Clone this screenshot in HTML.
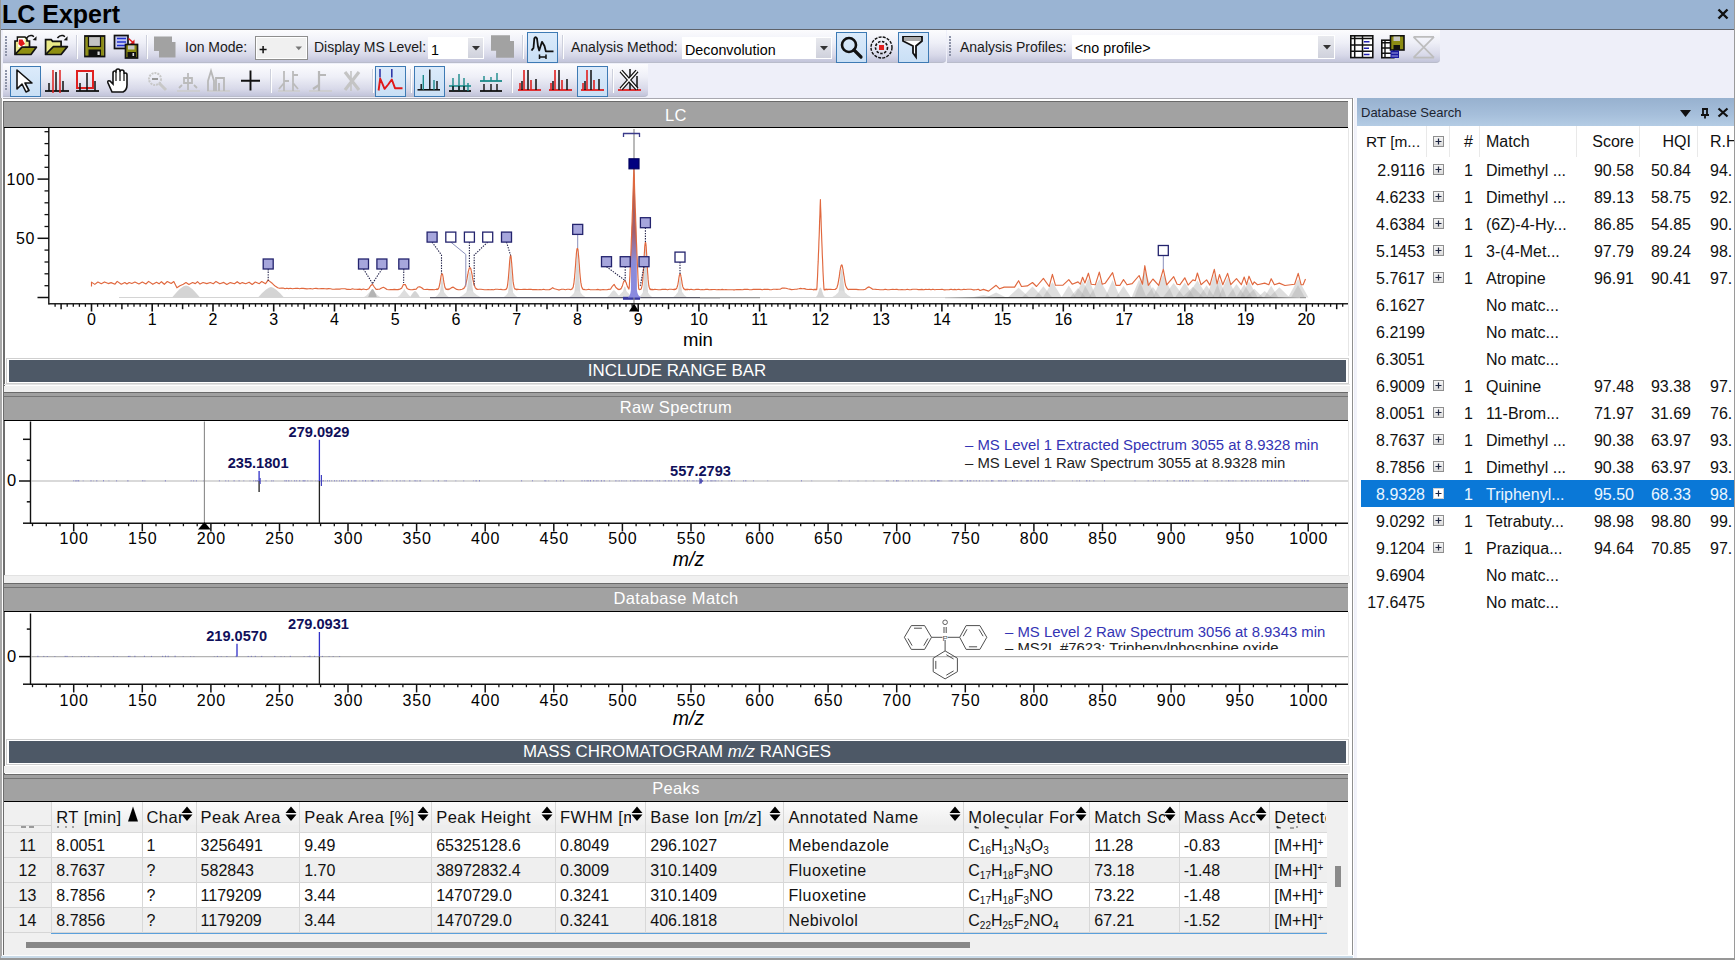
<!DOCTYPE html><html><head><meta charset="utf-8"><style>
html,body{margin:0;padding:0;}
body{width:1735px;height:960px;overflow:hidden;position:relative;background:#eeeff9;font-family:"Liberation Sans", sans-serif;}
div{box-sizing:border-box;}
svg{position:absolute;overflow:visible;}
</style></head><body>
<div style="position:absolute;left:0px;top:0px;width:1735px;height:29px;background:#9ab4d3;"></div>
<div style="position:absolute;left:0px;top:28.5px;width:1735px;height:1.5px;background:#5e6269;"></div>
<div style="position:absolute;left:0px;top:0px;width:1px;height:960px;background:#9a9a9a;"></div>
<div style="position:absolute;left:1734px;top:0px;width:1px;height:960px;background:#9a9a9a;"></div>
<div style="position:absolute;left:2px;top:0.5px;font-size:25px;line-height:26px;color:#000;font-weight:bold;white-space:nowrap;">LC Expert</div>
<svg style="left:1717px;top:8px" width="12" height="12"><path d="M1.5 1.5L10.5 10.5M10.5 1.5L1.5 10.5" stroke="#111" stroke-width="2.4"/></svg>
<div style="position:absolute;left:3px;top:30px;width:943px;height:33px;background:linear-gradient(#fcfcfe 0%,#eeeff7 40%,#d8d9e9 78%,#c2c4da 100%);border-bottom:1px solid #b9bccb;border-radius:0 0 4px 0;"></div>
<div style="position:absolute;left:5px;top:36px;width:2px;height:2px;background:#8d93a8;"></div>
<div style="position:absolute;left:5px;top:39px;width:2px;height:2px;background:#8d93a8;"></div>
<div style="position:absolute;left:5px;top:42px;width:2px;height:2px;background:#8d93a8;"></div>
<div style="position:absolute;left:5px;top:45px;width:2px;height:2px;background:#8d93a8;"></div>
<div style="position:absolute;left:5px;top:48px;width:2px;height:2px;background:#8d93a8;"></div>
<div style="position:absolute;left:5px;top:51px;width:2px;height:2px;background:#8d93a8;"></div>
<div style="position:absolute;left:5px;top:54px;width:2px;height:2px;background:#8d93a8;"></div>
<div style="position:absolute;left:947px;top:30px;width:493px;height:33px;background:linear-gradient(#fcfcfe 0%,#eeeff7 40%,#d8d9e9 78%,#c2c4da 100%);border-bottom:1px solid #b9bccb;border-radius:0 0 4px 0;"></div>
<div style="position:absolute;left:949px;top:36px;width:2px;height:2px;background:#8d93a8;"></div>
<div style="position:absolute;left:949px;top:39px;width:2px;height:2px;background:#8d93a8;"></div>
<div style="position:absolute;left:949px;top:42px;width:2px;height:2px;background:#8d93a8;"></div>
<div style="position:absolute;left:949px;top:45px;width:2px;height:2px;background:#8d93a8;"></div>
<div style="position:absolute;left:949px;top:48px;width:2px;height:2px;background:#8d93a8;"></div>
<div style="position:absolute;left:949px;top:51px;width:2px;height:2px;background:#8d93a8;"></div>
<div style="position:absolute;left:949px;top:54px;width:2px;height:2px;background:#8d93a8;"></div>
<div style="position:absolute;left:3px;top:64px;width:645px;height:33px;background:linear-gradient(#fcfcfe 0%,#eeeff7 40%,#d8d9e9 78%,#c2c4da 100%);border-bottom:1px solid #b9bccb;border-radius:0 0 4px 0;"></div>
<div style="position:absolute;left:5px;top:70px;width:2px;height:2px;background:#8d93a8;"></div>
<div style="position:absolute;left:5px;top:73px;width:2px;height:2px;background:#8d93a8;"></div>
<div style="position:absolute;left:5px;top:76px;width:2px;height:2px;background:#8d93a8;"></div>
<div style="position:absolute;left:5px;top:79px;width:2px;height:2px;background:#8d93a8;"></div>
<div style="position:absolute;left:5px;top:82px;width:2px;height:2px;background:#8d93a8;"></div>
<div style="position:absolute;left:5px;top:85px;width:2px;height:2px;background:#8d93a8;"></div>
<div style="position:absolute;left:5px;top:88px;width:2px;height:2px;background:#8d93a8;"></div>
<div style="position:absolute;left:76px;top:35px;width:1px;height:24px;background:#cdd0dc;"></div>
<div style="position:absolute;left:77px;top:35px;width:1px;height:24px;background:#fff;"></div>
<div style="position:absolute;left:146px;top:35px;width:1px;height:24px;background:#cdd0dc;"></div>
<div style="position:absolute;left:147px;top:35px;width:1px;height:24px;background:#fff;"></div>
<div style="position:absolute;left:522px;top:35px;width:1px;height:24px;background:#cdd0dc;"></div>
<div style="position:absolute;left:523px;top:35px;width:1px;height:24px;background:#fff;"></div>
<div style="position:absolute;left:562px;top:35px;width:1px;height:24px;background:#cdd0dc;"></div>
<div style="position:absolute;left:563px;top:35px;width:1px;height:24px;background:#fff;"></div>
<div style="position:absolute;left:185px;top:39px;font-size:14px;line-height:16px;color:#1a1a1a;font-weight:normal;white-space:nowrap;">Ion Mode:</div>
<div style="position:absolute;left:255px;top:36px;width:53px;height:24px;background:#f0f0f0;border:1px solid #8e8e8e;box-shadow:inset 0 0 0 1px #fff;"></div>
<svg style="left:0;top:0" width="320" height="62"><path d="M259.6 49.6H266.6M263.1 46V53.2" stroke="#111" stroke-width="1.5"/><path d="M295.5 46.6H302L298.75 50.3Z" fill="#777"/></svg>
<div style="position:absolute;left:314px;top:39px;font-size:14px;line-height:16px;color:#1a1a1a;font-weight:normal;white-space:nowrap;">Display MS Level:</div>
<div style="position:absolute;left:428px;top:37px;width:56px;height:22px;background:#fff;border:1px solid #fff;"></div>
<div style="position:absolute;left:431px;top:42px;font-size:14.3px;line-height:17px;color:#000;font-weight:normal;white-space:nowrap;">1</div>
<div style="position:absolute;left:468px;top:38px;width:15px;height:20px;background:linear-gradient(#e8e9ee,#cfd1dc);"></div>
<svg style="left:472.0px;top:46.0px" width="8" height="5"><path d="M0 0H8L4 4.5Z" fill="#333"/></svg>
<div style="position:absolute;left:571px;top:39px;font-size:14px;line-height:16px;color:#1a1a1a;font-weight:normal;white-space:nowrap;">Analysis Method:</div>
<div style="position:absolute;left:682px;top:37px;width:150px;height:22px;background:#fff;border:1px solid #fff;"></div>
<div style="position:absolute;left:685px;top:42px;font-size:14.3px;line-height:17px;color:#000;font-weight:normal;white-space:nowrap;">Deconvolution</div>
<div style="position:absolute;left:816px;top:38px;width:15px;height:20px;background:linear-gradient(#e8e9ee,#cfd1dc);"></div>
<svg style="left:820.0px;top:46.0px" width="8" height="5"><path d="M0 0H8L4 4.5Z" fill="#333"/></svg>
<div style="position:absolute;left:960px;top:39px;font-size:14px;line-height:16px;color:#1a1a1a;font-weight:normal;white-space:nowrap;">Analysis Profiles:</div>
<div style="position:absolute;left:1072px;top:35px;width:263px;height:24px;background:#fff;border:1px solid #fff;"></div>
<div style="position:absolute;left:1075px;top:40px;font-size:14.3px;line-height:17px;color:#000;font-weight:normal;white-space:nowrap;">&lt;no profile&gt;</div>
<div style="position:absolute;left:1318px;top:36px;width:16px;height:22px;background:linear-gradient(#e8e9ee,#cfd1dc);"></div>
<svg style="left:1322.5px;top:45.0px" width="8" height="5"><path d="M0 0H8L4 4.5Z" fill="#333"/></svg>
<div style="position:absolute;left:527px;top:32px;width:31px;height:31px;background:linear-gradient(#dcebfb,#c9dff5);border:1px solid #3d7ab4;"></div>
<div style="position:absolute;left:836px;top:32px;width:31px;height:31px;background:linear-gradient(#dcebfb,#c9dff5);border:1px solid #3d7ab4;"></div>
<div style="position:absolute;left:898px;top:32px;width:31px;height:31px;background:linear-gradient(#dcebfb,#c9dff5);border:1px solid #3d7ab4;"></div>
<div style="position:absolute;left:270px;top:69px;width:1px;height:24px;background:#cdd0dc;"></div>
<div style="position:absolute;left:271px;top:69px;width:1px;height:24px;background:#fff;"></div>
<div style="position:absolute;left:372px;top:69px;width:1px;height:24px;background:#cdd0dc;"></div>
<div style="position:absolute;left:373px;top:69px;width:1px;height:24px;background:#fff;"></div>
<div style="position:absolute;left:410px;top:69px;width:1px;height:24px;background:#cdd0dc;"></div>
<div style="position:absolute;left:411px;top:69px;width:1px;height:24px;background:#fff;"></div>
<div style="position:absolute;left:511px;top:69px;width:1px;height:24px;background:#cdd0dc;"></div>
<div style="position:absolute;left:512px;top:69px;width:1px;height:24px;background:#fff;"></div>
<div style="position:absolute;left:612px;top:69px;width:1px;height:24px;background:#cdd0dc;"></div>
<div style="position:absolute;left:613px;top:69px;width:1px;height:24px;background:#fff;"></div>
<div style="position:absolute;left:10px;top:66px;width:31px;height:31px;background:linear-gradient(#dcebfb,#c9dff5);border:1px solid #3d7ab4;"></div>
<div style="position:absolute;left:375px;top:66px;width:31px;height:31px;background:linear-gradient(#dcebfb,#c9dff5);border:1px solid #3d7ab4;"></div>
<div style="position:absolute;left:414px;top:66px;width:31px;height:31px;background:linear-gradient(#dcebfb,#c9dff5);border:1px solid #3d7ab4;"></div>
<div style="position:absolute;left:577px;top:66px;width:31px;height:31px;background:linear-gradient(#dcebfb,#c9dff5);border:1px solid #3d7ab4;"></div>
<svg style="left:0;top:0" width="80" height="62"><path d="M15 54.5V41H17.5V37H25L27 39V41H29.5V47.2" fill="#eaea90" stroke="#111" stroke-width="1.7"/><rect x="18.2" y="38" width="6.5" height="9" fill="#fff"/><path d="M19 39.5L22.5 39.5L25 44L21 46.5L18.5 44Z" fill="#e01818"/><path d="M26.6 38 Q29 34.8 32 35.6 L34 36.6" stroke="#111" stroke-width="1.6" fill="none"/><path d="M36.6 36.2L36.4 40.4L32.6 40Z" fill="#111"/><path d="M15 54.5L22 47.2H36.4L31 54.5Z" fill="#8f8f12" stroke="#111" stroke-width="1.7" stroke-linejoin="round"/><path d="M45.6 54.5V39.6H51.2L52.6 41.3H61.1V46.6" fill="#eaea88" stroke="#111" stroke-width="1.7"/><path d="M57.4 38 Q60 34.8 63 35.6 L65 36.6" stroke="#111" stroke-width="1.6" fill="none"/><path d="M67.6 36.2L67.4 40.6L63.6 40.2Z" fill="#111"/><path d="M45.6 54.5L53.4 46.6H67.4L61.1 54.5Z" fill="#8f8f12" stroke="#111" stroke-width="1.7" stroke-linejoin="round"/></svg>
<svg style="left:84px;top:35px" width="21" height="22" viewBox="0 0 21 22"><rect x="1" y="1" width="19.5" height="20.5" fill="#8c8c14" stroke="#111" stroke-width="1.8"/><rect x="4.5" y="1.5" width="12" height="10" fill="#c4c4c4" stroke="#111" stroke-width="1.2"/><rect x="4.5" y="14.5" width="12.5" height="7" fill="#111"/><rect x="13.5" y="16.5" width="2.2" height="3.5" fill="#ddd"/><path d="M1.8 2V20.5M19.6 2V20.5" stroke="#a6a63a" stroke-width="0.8"/></svg>
<svg style="left:113px;top:34px" width="26" height="25" viewBox="0 0 26 25"><rect x="1.5" y="1.5" width="13.5" height="13" fill="#c4c8f0" stroke="#111" stroke-width="1.7"/><path d="M4 4.5H13M4 8H13M4 11.5H13" stroke="#2030d0" stroke-width="1.7"/><path d="M15.5 4.5L20 8.5" stroke="#e01818" stroke-width="1.5"/><path d="M21.5 5.5V10H17Z" fill="#e01818"/><rect x="12.5" y="10.5" width="12" height="13.5" fill="#8c8c14" stroke="#111" stroke-width="1.7"/><rect x="15" y="11.5" width="6.5" height="4" fill="#c8c8c8"/><rect x="14.5" y="18" width="8.5" height="5.5" fill="#111"/><rect x="19.5" y="19" width="1.6" height="3" fill="#ddd"/></svg>
<svg style="left:0;top:0" width="600" height="62"><path d="M491 35.3H510V41H514V57.7H496.1V50.7H491Z" fill="#a2a2a2"/><path d="M154 36.6H172V42H175.5V57.4H159V51H154Z" fill="#a2a2a2"/><path d="M531.6 50.7Q532.5 49 533.5 48L534.3 38.5Q535.5 36 537 38.5L538 46.5L539.2 50.5L542 41.8L544.5 46L545.8 51.3H553.5" stroke="#111" stroke-width="1.8" fill="none" stroke-linejoin="round"/><path d="M539.5 57H546M539.5 54.5V59M546 54.5V59" stroke="#111" stroke-width="1.5"/></svg>
<svg style="left:839px;top:35px" width="25" height="25" viewBox="0 0 25 25"><circle cx="10" cy="10" r="7" fill="none" stroke="#111" stroke-width="2.6"/><path d="M15 15L22 22" stroke="#111" stroke-width="3.2" stroke-linecap="round"/></svg>
<svg style="left:869px;top:35px" width="25" height="25" viewBox="0 0 25 25"><circle cx="12.5" cy="12.5" r="10.5" fill="none" stroke="#111" stroke-width="1.4" stroke-dasharray="3 1.2"/><circle cx="12.5" cy="12.5" r="6" fill="none" stroke="#111" stroke-width="1.6" stroke-dasharray="2.5 1.5"/><rect x="10" y="10" width="5" height="5" fill="#e02020"/></svg>
<svg style="left:901px;top:35px" width="24" height="25" viewBox="0 0 24 25"><path d="M2 2H21V6L15 11V22L12 18V11L2 6Z" fill="#fff" stroke="#111" stroke-width="1.8"/><rect x="3" y="2" width="17" height="4" fill="#a8a8a8"/></svg>
<svg style="left:1340px;top:30px" width="100" height="32"><rect x="10.8" y="5.8" width="22" height="21.8" fill="#fff" stroke="#111" stroke-width="1.6"/><path d="M10.5 8.6H33M10.5 15H33M10.5 21.3H33M14.7 5.5V28M22.5 5.5V28" stroke="#111" stroke-width="1.5"/><path d="M23.8 11.8H29.5M23.8 18.2H29M23.8 24.5H29.5" stroke="#2020b0" stroke-width="1.4"/><rect x="41.8" y="10.2" width="12" height="17.5" fill="#fff" stroke="#111" stroke-width="1.6"/><path d="M41.5 12.8H54M41.5 18H54M41.5 23.2H54M45 10V28" stroke="#111" stroke-width="1.4"/><rect x="50.5" y="5.8" width="13.5" height="14.2" fill="#8c8c14" stroke="#111" stroke-width="1.6"/><rect x="53.5" y="6.5" width="6.5" height="4.5" fill="#c8c8c8"/><rect x="53.5" y="15" width="6.5" height="5" fill="#111"/><rect x="50.5" y="20.5" width="8.5" height="7.5" fill="#1818a0"/><path d="M51.5 23H58M51.5 26H58" stroke="#c8c8f0" stroke-width="0.8"/><path d="M73.5 6.8H94M73.5 27.6H94M94 6.8L73.5 27.6M73.5 6.8L94 27.6" stroke="#bdbdbd" stroke-width="1.7" fill="none"/></svg>
<svg style="left:14px;top:68px" width="24" height="26" viewBox="0 0 24 26"><path d="M3 2L3 21L8 16L12 24L15 22.5L11 15L18 15Z" fill="#fff" stroke="#111" stroke-width="1.6" stroke-linejoin="round"/></svg>
<svg style="left:44px;top:69px" width="26" height="24" viewBox="0 0 26 24"><path d="M1 22H25" stroke="#111" stroke-width="1.8"/><path d="M5 22V14M12 22V3M19 22V12" stroke="#111" stroke-width="1.5"/><path d="M9 1V24M16 1V24" stroke="#e02020" stroke-width="1.5"/></svg>
<svg style="left:75px;top:69px" width="25" height="24" viewBox="0 0 25 24"><path d="M1 22H24" stroke="#111" stroke-width="1.8"/><rect x="2" y="2" width="16" height="17" fill="none" stroke="#e02020" stroke-width="2"/><path d="M5 22V14M12 22V4M20 22V12" stroke="#111" stroke-width="1.5"/></svg>
<svg style="left:106px;top:68px" width="22" height="26" viewBox="0 0 22 26"><path d="M6 24 L2 15 Q1 12 4 13 L7 16 V5 Q7 3 9 3 Q10 3 10 5 V3 Q10 1 12 1 Q14 1 14 3 V4 Q14 2 16 2 Q18 2 18 4 V6 Q18 5 19.5 5 Q21 5 21 7 V17 Q21 22 17 24Z" fill="#fff" stroke="#111" stroke-width="1.6"/><path d="M10 5V13M14 4V13M18 6V13" stroke="#111" stroke-width="1.2"/></svg>
<svg style="left:147px;top:71px" width="22" height="22" viewBox="0 0 22 22"><circle cx="8" cy="8" r="6" fill="none" stroke="#c8c8c8" stroke-width="2" stroke-dasharray="2 1"/><path d="M5 8H11" stroke="#999" stroke-width="2"/><path d="M12 12L19 19" stroke="#c8c8c8" stroke-width="3"/></svg>
<svg style="left:176px;top:70px" width="25" height="23" viewBox="0 0 25 23"><path d="M1 21H24" stroke="#ccc" stroke-width="1.6"/><path d="M12 3V20M8 8H16V13H8Z" stroke="#bbb" stroke-width="1.8" fill="none"/><path d="M3 18L6 15M21 18L18 15" stroke="#bbb" stroke-width="1.8"/></svg>
<svg style="left:206px;top:69px" width="25" height="24" viewBox="0 0 25 24"><path d="M1 22H24" stroke="#ccc" stroke-width="1.6"/><path d="M2 22V12L5 2L8 12V22M10 22V9H18V22M13 14V22" stroke="#b8b8b8" stroke-width="1.8" fill="none"/></svg>
<svg style="left:240px;top:70px" width="21" height="22" viewBox="0 0 21 22"><path d="M10.5 0.5V20.5M1 10.7H20" stroke="#111" stroke-width="1.9"/></svg>
<svg style="left:277px;top:69px" width="24" height="24" viewBox="0 0 24 24"><path d="M1 22H23" stroke="#ccc" stroke-width="1.6"/><path d="M7 2V22M16 2V22M7 14L2 20M16 14L21 20M16 6H21M7 12H12" stroke="#bbb" stroke-width="1.8" fill="none"/></svg>
<svg style="left:308px;top:69px" width="25" height="24" viewBox="0 0 25 24"><path d="M1 22H24" stroke="#ccc" stroke-width="1.6"/><path d="M11 2V22M11 6H18M11 16L5 20" stroke="#b8b8b8" stroke-width="2.2" fill="none"/></svg>
<svg style="left:342px;top:69px" width="20" height="24" viewBox="0 0 20 24"><path d="M3 3L17 21M17 3L3 21" stroke="#c4c4c4" stroke-width="3.2"/><path d="M9 2V22" stroke="#c4c4c4" stroke-width="1.6"/></svg>
<svg style="left:0;top:0" width="460" height="97"><path d="M380 69V77.5M391.8 69V77.5" stroke="#3038a8" stroke-width="1.6"/><path d="M378.6 90.5L380.2 78.5L384.6 88.8L388.2 84.5L391.8 79.5L395 88.2H402.5" stroke="#e01818" stroke-width="1.9" fill="none" stroke-linejoin="round"/><path d="M417.5 89.8H440" stroke="#111" stroke-width="1.6"/><path d="M421.2 89.8V84M429.8 89.8V69.5M437 89.8V81" stroke="#111" stroke-width="1.4"/><path d="M423.3 89.8V75M434 89.8V80" stroke="#1a8a8a" stroke-width="1.4"/></svg>
<svg style="left:448px;top:69px" width="24" height="24" viewBox="0 0 24 24"><path d="M1 22H23" stroke="#111" stroke-width="1.8"/><path d="M1 17H23" stroke="#1a8a8a" stroke-width="1.6"/><path d="M5 22V9M11 22V5M16 22V9M20 22V14" stroke="#1a8a8a" stroke-width="1.4"/><path d="M5 22V17M11 22V17M16 22V17" stroke="#111" stroke-width="1.4"/></svg>
<svg style="left:479px;top:69px" width="24" height="24" viewBox="0 0 24 24"><path d="M1 22H23" stroke="#111" stroke-width="1.8"/><path d="M1 12H23" stroke="#1a8a8a" stroke-width="1.8"/><path d="M5 12V7M12 12V8M18 12V4" stroke="#1a8a8a" stroke-width="1.4"/><path d="M5 22V15M12 22V15M18 22V15" stroke="#111" stroke-width="1.4"/></svg>
<svg style="left:517px;top:68px" width="25" height="24" viewBox="0 0 25 24"><path d="M1 22H24" stroke="#e02020" stroke-width="1.8"/><path d="M7 22V2M14 22V12M3 22V15" stroke="#e02020" stroke-width="1.6"/><path d="M11 22V2M19 22V11M5 22V13" stroke="#111" stroke-width="1.5"/></svg>
<svg style="left:548px;top:68px" width="25" height="24" viewBox="0 0 25 24"><path d="M1 22H24" stroke="#e02020" stroke-width="1.8"/><path d="M7 22V2M14 22V12M3 22V15" stroke="#e02020" stroke-width="1.6"/><path d="M11 22V2M19 22V11M5 22V13" stroke="#111" stroke-width="1.5"/></svg>
<svg style="left:580px;top:68px" width="25" height="24" viewBox="0 0 25 24"><path d="M1 22H24" stroke="#e02020" stroke-width="1.8"/><path d="M7 22V2M14 22V12M3 22V15" stroke="#e02020" stroke-width="1.6"/><path d="M11 22V2M19 22V11M5 22V13" stroke="#111" stroke-width="1.5"/></svg>
<svg style="left:617px;top:68px" width="25" height="25" viewBox="0 0 25 25"><path d="M1 22H24" stroke="#e02020" stroke-width="1.8"/><path d="M13 1V22M20 8V22" stroke="#111" stroke-width="1.5"/><path d="M4 3L20 21M20 3L4 21" stroke="#111" stroke-width="4"/><path d="M4 3L20 21M20 3L4 21" stroke="#fff" stroke-width="1.4"/></svg>
<div style="position:absolute;left:1px;top:98px;width:1353px;height:862px;background:#fff;"></div>
<div style="position:absolute;left:3px;top:98px;width:1350px;height:1px;background:#a8a8b0;"></div>
<div style="position:absolute;left:0px;top:98px;width:2px;height:862px;background:#a9a9a9;"></div>
<div style="position:absolute;left:2px;top:98px;width:1px;height:858px;background:#fff;"></div>
<div style="position:absolute;left:1352px;top:98px;width:1px;height:860px;background:#8f8f8f;"></div>
<div style="position:absolute;left:3px;top:101px;width:1.5px;height:855px;background:#6e6e6e;"></div>
<div style="position:absolute;left:3px;top:955px;width:1350px;height:1px;background:#fdfdfd;"></div>
<div style="position:absolute;left:1px;top:956px;width:1352px;height:2px;background:#c9dae8;"></div>
<div style="position:absolute;left:4px;top:101px;width:1344px;height:1px;background:#6a6a6a;"></div>
<div style="position:absolute;left:4px;top:102px;width:1344px;height:25px;background:#a2a2a2;"></div>
<div style="position:absolute;left:4px;top:127px;width:1344px;height:1px;background:#000;"></div>
<div style="position:absolute;left:4px;width:1344px;top:103px;height:24px;line-height:24px;text-align:center;color:#fff;font-size:16.5px;letter-spacing:0.35px;">LC</div>
<div style="position:absolute;left:6px;top:357.5px;width:1343px;height:26.5px;background:#fff;border:1px solid #cfcfcf;"></div>
<div style="position:absolute;left:9px;top:360px;width:1337px;height:22px;background:#4d5866;"></div>
<div style="position:absolute;left:8px;width:1338px;top:360px;height:22px;line-height:22px;text-align:center;color:#fff;font-size:16.9px;">INCLUDE RANGE BAR</div>
<div style="position:absolute;left:4px;top:386px;width:1346px;height:6px;background:#f0f0f0;"></div>
<div style="position:absolute;left:4px;top:384px;width:1346px;height:1px;background:#e4e4e4;"></div>
<div style="position:absolute;left:1348px;top:421px;width:1px;height:154px;background:#e6e6e6;"></div>
<div style="position:absolute;left:4px;top:575px;width:1345px;height:1px;background:#e2e2e2;"></div>
<div style="position:absolute;left:1348px;top:612px;width:1px;height:125px;background:#e6e6e6;"></div>
<div style="position:absolute;left:1348px;top:128px;width:1px;height:228px;background:#e6e6e6;"></div>
<div style="position:absolute;left:4px;top:392px;width:1344px;height:1px;background:#6a6a6a;"></div>
<div style="position:absolute;left:4px;top:393px;width:1344px;height:2.5px;background:#a0a0a0;"></div>
<div style="position:absolute;left:4px;top:395.5px;width:1344px;height:1px;background:#747474;"></div>
<div style="position:absolute;left:4px;top:396.5px;width:1344px;height:23.5px;background:#a2a2a2;"></div>
<div style="position:absolute;left:4px;top:420px;width:1344px;height:1px;background:#000;"></div>
<div style="position:absolute;left:4px;width:1344px;top:394px;height:26px;line-height:26px;text-align:center;color:#fff;font-size:16.5px;letter-spacing:0.35px;">Raw Spectrum</div>
<div style="position:absolute;left:4px;top:576px;width:1346px;height:7px;background:#f0f0f0;"></div>
<div style="position:absolute;left:4px;top:583px;width:1344px;height:1px;background:#6a6a6a;"></div>
<div style="position:absolute;left:4px;top:584px;width:1344px;height:2.5px;background:#a0a0a0;"></div>
<div style="position:absolute;left:4px;top:586.5px;width:1344px;height:1px;background:#747474;"></div>
<div style="position:absolute;left:4px;top:587.5px;width:1344px;height:23.5px;background:#a2a2a2;"></div>
<div style="position:absolute;left:4px;top:611px;width:1344px;height:1px;background:#000;"></div>
<div style="position:absolute;left:4px;width:1344px;top:585px;height:26px;line-height:26px;text-align:center;color:#fff;font-size:16.5px;letter-spacing:0.35px;">Database Match</div>
<div style="position:absolute;left:6px;top:738.5px;width:1343px;height:26.5px;background:#fff;border:1px solid #cfcfcf;"></div>
<div style="position:absolute;left:9px;top:741px;width:1337px;height:22px;background:#4d5866;"></div>
<div style="position:absolute;left:8px;width:1338px;top:741px;height:22px;line-height:22px;text-align:center;color:#fff;font-size:16.9px;">MASS CHROMATOGRAM <i>m/z</i> RANGES</div>
<div style="position:absolute;left:4px;top:766px;width:1346px;height:7px;background:#f0f0f0;"></div>
<div style="position:absolute;left:4px;top:774px;width:1344px;height:1px;background:#6a6a6a;"></div>
<div style="position:absolute;left:4px;top:775px;width:1344px;height:2.5px;background:#a0a0a0;"></div>
<div style="position:absolute;left:4px;top:777.5px;width:1344px;height:1px;background:#747474;"></div>
<div style="position:absolute;left:4px;top:778.5px;width:1344px;height:22.5px;background:#a2a2a2;"></div>
<div style="position:absolute;left:4px;top:801px;width:1344px;height:1px;background:#000;"></div>
<div style="position:absolute;left:4px;width:1344px;top:776px;height:25px;line-height:25px;text-align:center;color:#fff;font-size:16.5px;letter-spacing:0.35px;">Peaks</div>
<div style="position:absolute;left:1355px;top:98px;width:380px;height:862px;background:#fff;"></div>
<div style="position:absolute;left:1355px;top:98px;width:2px;height:862px;background:#f2f3fa;"></div>
<div style="position:absolute;left:1357px;top:98px;width:377px;height:28px;background:linear-gradient(#97b1cf,#a6bfdb 60%,#b4cce4);"></div>
<div style="position:absolute;left:1361px;top:105px;font-size:13px;line-height:16px;color:#1b2431;font-weight:normal;white-space:nowrap;">Database Search</div>
<svg style="left:1680px;top:110px" width="12" height="8"><path d="M0 0H11L5.5 7Z" fill="#111"/></svg>
<svg style="left:1699.5px;top:107.5px" width="10" height="12"><path d="M2 1H8M3 1V7H7V1M1 7H9M5 7V10.5" stroke="#111" stroke-width="1.8" fill="none"/></svg>
<svg style="left:1717px;top:107px" width="12" height="11"><path d="M1.5 1.5L10.5 9.5M10.5 1.5L1.5 9.5" stroke="#111" stroke-width="2.2"/></svg>
<div style="position:absolute;left:1426px;top:126px;width:1px;height:31px;background:#e9e9e9;"></div>
<div style="position:absolute;left:1449px;top:126px;width:1px;height:31px;background:#e9e9e9;"></div>
<div style="position:absolute;left:1479px;top:126px;width:1px;height:31px;background:#e9e9e9;"></div>
<div style="position:absolute;left:1576px;top:126px;width:1px;height:31px;background:#e9e9e9;"></div>
<div style="position:absolute;left:1639px;top:126px;width:1px;height:31px;background:#e9e9e9;"></div>
<div style="position:absolute;left:1697px;top:126px;width:1px;height:31px;background:#e9e9e9;"></div>
<div style="position:absolute;left:1366px;top:133px;font-size:15.4px;line-height:18px;color:#111;font-weight:normal;white-space:nowrap;">RT [m...</div>
<div style="position:absolute;left:1433px;top:136px;width:11px;height:11px;background:linear-gradient(#f6f6f6,#dcdcdc);border:1px solid #8e8e8e;"></div>
<svg style="left:1433px;top:136px" width="11" height="11"><path d="M2.5 5.5H8.5M5.5 2.5V8.5" stroke="#1c2440" stroke-width="1.2"/></svg>
<div style="position:absolute;left:1273px;width:200px;top:133px;text-align:right;font-size:16px;line-height:18px;color:#111;white-space:nowrap;">#</div>
<div style="position:absolute;left:1486px;top:133px;font-size:16px;line-height:18px;color:#111;font-weight:normal;white-space:nowrap;">Match</div>
<div style="position:absolute;left:1434px;width:200px;top:133px;text-align:right;font-size:16px;line-height:18px;color:#111;white-space:nowrap;">Score</div>
<div style="position:absolute;left:1491px;width:200px;top:133px;text-align:right;font-size:16px;line-height:18px;color:#111;white-space:nowrap;">HQI</div>
<div style="position:absolute;left:1710px;top:133px;font-size:16px;line-height:18px;color:#111;font-weight:normal;white-space:nowrap;">R.H</div>
<div style="position:absolute;left:1225px;width:200px;top:162px;text-align:right;font-size:16px;line-height:18px;color:#111;white-space:nowrap;">2.9116</div>
<div style="position:absolute;left:1433px;top:164px;width:11px;height:11px;background:linear-gradient(#f6f6f6,#dcdcdc);border:1px solid #8e8e8e;"></div>
<svg style="left:1433px;top:164px" width="11" height="11"><path d="M2.5 5.5H8.5M5.5 2.5V8.5" stroke="#1c2440" stroke-width="1.2"/></svg>
<div style="position:absolute;left:1273px;width:200px;top:162px;text-align:right;font-size:16px;line-height:18px;color:#111;white-space:nowrap;">1</div>
<div style="position:absolute;left:1434px;width:200px;top:162px;text-align:right;font-size:16px;line-height:18px;color:#111;white-space:nowrap;">90.58</div>
<div style="position:absolute;left:1491px;width:200px;top:162px;text-align:right;font-size:16px;line-height:18px;color:#111;white-space:nowrap;">50.84</div>
<div style="position:absolute;left:1710px;top:162px;font-size:16px;line-height:18px;color:#111;font-weight:normal;white-space:nowrap;">94.</div>
<div style="position:absolute;left:1486px;top:162px;font-size:16px;line-height:18px;color:#111;font-weight:normal;white-space:nowrap;">Dimethyl ...</div>
<div style="position:absolute;left:1225px;width:200px;top:189px;text-align:right;font-size:16px;line-height:18px;color:#111;white-space:nowrap;">4.6233</div>
<div style="position:absolute;left:1433px;top:191px;width:11px;height:11px;background:linear-gradient(#f6f6f6,#dcdcdc);border:1px solid #8e8e8e;"></div>
<svg style="left:1433px;top:191px" width="11" height="11"><path d="M2.5 5.5H8.5M5.5 2.5V8.5" stroke="#1c2440" stroke-width="1.2"/></svg>
<div style="position:absolute;left:1273px;width:200px;top:189px;text-align:right;font-size:16px;line-height:18px;color:#111;white-space:nowrap;">1</div>
<div style="position:absolute;left:1434px;width:200px;top:189px;text-align:right;font-size:16px;line-height:18px;color:#111;white-space:nowrap;">89.13</div>
<div style="position:absolute;left:1491px;width:200px;top:189px;text-align:right;font-size:16px;line-height:18px;color:#111;white-space:nowrap;">58.75</div>
<div style="position:absolute;left:1710px;top:189px;font-size:16px;line-height:18px;color:#111;font-weight:normal;white-space:nowrap;">92.</div>
<div style="position:absolute;left:1486px;top:189px;font-size:16px;line-height:18px;color:#111;font-weight:normal;white-space:nowrap;">Dimethyl ...</div>
<div style="position:absolute;left:1225px;width:200px;top:216px;text-align:right;font-size:16px;line-height:18px;color:#111;white-space:nowrap;">4.6384</div>
<div style="position:absolute;left:1433px;top:218px;width:11px;height:11px;background:linear-gradient(#f6f6f6,#dcdcdc);border:1px solid #8e8e8e;"></div>
<svg style="left:1433px;top:218px" width="11" height="11"><path d="M2.5 5.5H8.5M5.5 2.5V8.5" stroke="#1c2440" stroke-width="1.2"/></svg>
<div style="position:absolute;left:1273px;width:200px;top:216px;text-align:right;font-size:16px;line-height:18px;color:#111;white-space:nowrap;">1</div>
<div style="position:absolute;left:1434px;width:200px;top:216px;text-align:right;font-size:16px;line-height:18px;color:#111;white-space:nowrap;">86.85</div>
<div style="position:absolute;left:1491px;width:200px;top:216px;text-align:right;font-size:16px;line-height:18px;color:#111;white-space:nowrap;">54.85</div>
<div style="position:absolute;left:1710px;top:216px;font-size:16px;line-height:18px;color:#111;font-weight:normal;white-space:nowrap;">90.</div>
<div style="position:absolute;left:1486px;top:216px;font-size:16px;line-height:18px;color:#111;font-weight:normal;white-space:nowrap;">(6Z)-4-Hy...</div>
<div style="position:absolute;left:1225px;width:200px;top:243px;text-align:right;font-size:16px;line-height:18px;color:#111;white-space:nowrap;">5.1453</div>
<div style="position:absolute;left:1433px;top:245px;width:11px;height:11px;background:linear-gradient(#f6f6f6,#dcdcdc);border:1px solid #8e8e8e;"></div>
<svg style="left:1433px;top:245px" width="11" height="11"><path d="M2.5 5.5H8.5M5.5 2.5V8.5" stroke="#1c2440" stroke-width="1.2"/></svg>
<div style="position:absolute;left:1273px;width:200px;top:243px;text-align:right;font-size:16px;line-height:18px;color:#111;white-space:nowrap;">1</div>
<div style="position:absolute;left:1434px;width:200px;top:243px;text-align:right;font-size:16px;line-height:18px;color:#111;white-space:nowrap;">97.79</div>
<div style="position:absolute;left:1491px;width:200px;top:243px;text-align:right;font-size:16px;line-height:18px;color:#111;white-space:nowrap;">89.24</div>
<div style="position:absolute;left:1710px;top:243px;font-size:16px;line-height:18px;color:#111;font-weight:normal;white-space:nowrap;">98.</div>
<div style="position:absolute;left:1486px;top:243px;font-size:16px;line-height:18px;color:#111;font-weight:normal;white-space:nowrap;">3-(4-Met...</div>
<div style="position:absolute;left:1225px;width:200px;top:270px;text-align:right;font-size:16px;line-height:18px;color:#111;white-space:nowrap;">5.7617</div>
<div style="position:absolute;left:1433px;top:272px;width:11px;height:11px;background:linear-gradient(#f6f6f6,#dcdcdc);border:1px solid #8e8e8e;"></div>
<svg style="left:1433px;top:272px" width="11" height="11"><path d="M2.5 5.5H8.5M5.5 2.5V8.5" stroke="#1c2440" stroke-width="1.2"/></svg>
<div style="position:absolute;left:1273px;width:200px;top:270px;text-align:right;font-size:16px;line-height:18px;color:#111;white-space:nowrap;">1</div>
<div style="position:absolute;left:1434px;width:200px;top:270px;text-align:right;font-size:16px;line-height:18px;color:#111;white-space:nowrap;">96.91</div>
<div style="position:absolute;left:1491px;width:200px;top:270px;text-align:right;font-size:16px;line-height:18px;color:#111;white-space:nowrap;">90.41</div>
<div style="position:absolute;left:1710px;top:270px;font-size:16px;line-height:18px;color:#111;font-weight:normal;white-space:nowrap;">97.</div>
<div style="position:absolute;left:1486px;top:270px;font-size:16px;line-height:18px;color:#111;font-weight:normal;white-space:nowrap;">Atropine</div>
<div style="position:absolute;left:1225px;width:200px;top:297px;text-align:right;font-size:16px;line-height:18px;color:#111;white-space:nowrap;">6.1627</div>
<div style="position:absolute;left:1486px;top:297px;font-size:16px;line-height:18px;color:#111;font-weight:normal;white-space:nowrap;">No matc...</div>
<div style="position:absolute;left:1225px;width:200px;top:324px;text-align:right;font-size:16px;line-height:18px;color:#111;white-space:nowrap;">6.2199</div>
<div style="position:absolute;left:1486px;top:324px;font-size:16px;line-height:18px;color:#111;font-weight:normal;white-space:nowrap;">No matc...</div>
<div style="position:absolute;left:1225px;width:200px;top:351px;text-align:right;font-size:16px;line-height:18px;color:#111;white-space:nowrap;">6.3051</div>
<div style="position:absolute;left:1486px;top:351px;font-size:16px;line-height:18px;color:#111;font-weight:normal;white-space:nowrap;">No matc...</div>
<div style="position:absolute;left:1225px;width:200px;top:378px;text-align:right;font-size:16px;line-height:18px;color:#111;white-space:nowrap;">6.9009</div>
<div style="position:absolute;left:1433px;top:380px;width:11px;height:11px;background:linear-gradient(#f6f6f6,#dcdcdc);border:1px solid #8e8e8e;"></div>
<svg style="left:1433px;top:380px" width="11" height="11"><path d="M2.5 5.5H8.5M5.5 2.5V8.5" stroke="#1c2440" stroke-width="1.2"/></svg>
<div style="position:absolute;left:1273px;width:200px;top:378px;text-align:right;font-size:16px;line-height:18px;color:#111;white-space:nowrap;">1</div>
<div style="position:absolute;left:1434px;width:200px;top:378px;text-align:right;font-size:16px;line-height:18px;color:#111;white-space:nowrap;">97.48</div>
<div style="position:absolute;left:1491px;width:200px;top:378px;text-align:right;font-size:16px;line-height:18px;color:#111;white-space:nowrap;">93.38</div>
<div style="position:absolute;left:1710px;top:378px;font-size:16px;line-height:18px;color:#111;font-weight:normal;white-space:nowrap;">97.</div>
<div style="position:absolute;left:1486px;top:378px;font-size:16px;line-height:18px;color:#111;font-weight:normal;white-space:nowrap;">Quinine</div>
<div style="position:absolute;left:1225px;width:200px;top:405px;text-align:right;font-size:16px;line-height:18px;color:#111;white-space:nowrap;">8.0051</div>
<div style="position:absolute;left:1433px;top:407px;width:11px;height:11px;background:linear-gradient(#f6f6f6,#dcdcdc);border:1px solid #8e8e8e;"></div>
<svg style="left:1433px;top:407px" width="11" height="11"><path d="M2.5 5.5H8.5M5.5 2.5V8.5" stroke="#1c2440" stroke-width="1.2"/></svg>
<div style="position:absolute;left:1273px;width:200px;top:405px;text-align:right;font-size:16px;line-height:18px;color:#111;white-space:nowrap;">1</div>
<div style="position:absolute;left:1434px;width:200px;top:405px;text-align:right;font-size:16px;line-height:18px;color:#111;white-space:nowrap;">71.97</div>
<div style="position:absolute;left:1491px;width:200px;top:405px;text-align:right;font-size:16px;line-height:18px;color:#111;white-space:nowrap;">31.69</div>
<div style="position:absolute;left:1710px;top:405px;font-size:16px;line-height:18px;color:#111;font-weight:normal;white-space:nowrap;">76.</div>
<div style="position:absolute;left:1486px;top:405px;font-size:16px;line-height:18px;color:#111;font-weight:normal;white-space:nowrap;">11-Brom...</div>
<div style="position:absolute;left:1225px;width:200px;top:432px;text-align:right;font-size:16px;line-height:18px;color:#111;white-space:nowrap;">8.7637</div>
<div style="position:absolute;left:1433px;top:434px;width:11px;height:11px;background:linear-gradient(#f6f6f6,#dcdcdc);border:1px solid #8e8e8e;"></div>
<svg style="left:1433px;top:434px" width="11" height="11"><path d="M2.5 5.5H8.5M5.5 2.5V8.5" stroke="#1c2440" stroke-width="1.2"/></svg>
<div style="position:absolute;left:1273px;width:200px;top:432px;text-align:right;font-size:16px;line-height:18px;color:#111;white-space:nowrap;">1</div>
<div style="position:absolute;left:1434px;width:200px;top:432px;text-align:right;font-size:16px;line-height:18px;color:#111;white-space:nowrap;">90.38</div>
<div style="position:absolute;left:1491px;width:200px;top:432px;text-align:right;font-size:16px;line-height:18px;color:#111;white-space:nowrap;">63.97</div>
<div style="position:absolute;left:1710px;top:432px;font-size:16px;line-height:18px;color:#111;font-weight:normal;white-space:nowrap;">93.</div>
<div style="position:absolute;left:1486px;top:432px;font-size:16px;line-height:18px;color:#111;font-weight:normal;white-space:nowrap;">Dimethyl ...</div>
<div style="position:absolute;left:1225px;width:200px;top:459px;text-align:right;font-size:16px;line-height:18px;color:#111;white-space:nowrap;">8.7856</div>
<div style="position:absolute;left:1433px;top:461px;width:11px;height:11px;background:linear-gradient(#f6f6f6,#dcdcdc);border:1px solid #8e8e8e;"></div>
<svg style="left:1433px;top:461px" width="11" height="11"><path d="M2.5 5.5H8.5M5.5 2.5V8.5" stroke="#1c2440" stroke-width="1.2"/></svg>
<div style="position:absolute;left:1273px;width:200px;top:459px;text-align:right;font-size:16px;line-height:18px;color:#111;white-space:nowrap;">1</div>
<div style="position:absolute;left:1434px;width:200px;top:459px;text-align:right;font-size:16px;line-height:18px;color:#111;white-space:nowrap;">90.38</div>
<div style="position:absolute;left:1491px;width:200px;top:459px;text-align:right;font-size:16px;line-height:18px;color:#111;white-space:nowrap;">63.97</div>
<div style="position:absolute;left:1710px;top:459px;font-size:16px;line-height:18px;color:#111;font-weight:normal;white-space:nowrap;">93.</div>
<div style="position:absolute;left:1486px;top:459px;font-size:16px;line-height:18px;color:#111;font-weight:normal;white-space:nowrap;">Dimethyl ...</div>
<div style="position:absolute;left:1361px;top:480px;width:374px;height:27px;background:#0a78d7;"></div>
<div style="position:absolute;left:1225px;width:200px;top:486px;text-align:right;font-size:16px;line-height:18px;color:#eaf6ff;white-space:nowrap;">8.9328</div>
<div style="position:absolute;left:1433px;top:488px;width:11px;height:11px;background:#fff;border:1px solid #d0d0d0;"></div>
<svg style="left:1433px;top:488px" width="11" height="11"><path d="M2.5 5.5H8.5M5.5 2.5V8.5" stroke="#1c2440" stroke-width="1.2"/></svg>
<div style="position:absolute;left:1273px;width:200px;top:486px;text-align:right;font-size:16px;line-height:18px;color:#eaf6ff;white-space:nowrap;">1</div>
<div style="position:absolute;left:1434px;width:200px;top:486px;text-align:right;font-size:16px;line-height:18px;color:#eaf6ff;white-space:nowrap;">95.50</div>
<div style="position:absolute;left:1491px;width:200px;top:486px;text-align:right;font-size:16px;line-height:18px;color:#eaf6ff;white-space:nowrap;">68.33</div>
<div style="position:absolute;left:1710px;top:486px;font-size:16px;line-height:18px;color:#eaf6ff;font-weight:normal;white-space:nowrap;">98.</div>
<div style="position:absolute;left:1486px;top:486px;font-size:16px;line-height:18px;color:#eaf6ff;font-weight:normal;white-space:nowrap;">Triphenyl...</div>
<div style="position:absolute;left:1225px;width:200px;top:513px;text-align:right;font-size:16px;line-height:18px;color:#111;white-space:nowrap;">9.0292</div>
<div style="position:absolute;left:1433px;top:515px;width:11px;height:11px;background:linear-gradient(#f6f6f6,#dcdcdc);border:1px solid #8e8e8e;"></div>
<svg style="left:1433px;top:515px" width="11" height="11"><path d="M2.5 5.5H8.5M5.5 2.5V8.5" stroke="#1c2440" stroke-width="1.2"/></svg>
<div style="position:absolute;left:1273px;width:200px;top:513px;text-align:right;font-size:16px;line-height:18px;color:#111;white-space:nowrap;">1</div>
<div style="position:absolute;left:1434px;width:200px;top:513px;text-align:right;font-size:16px;line-height:18px;color:#111;white-space:nowrap;">98.98</div>
<div style="position:absolute;left:1491px;width:200px;top:513px;text-align:right;font-size:16px;line-height:18px;color:#111;white-space:nowrap;">98.80</div>
<div style="position:absolute;left:1710px;top:513px;font-size:16px;line-height:18px;color:#111;font-weight:normal;white-space:nowrap;">99.</div>
<div style="position:absolute;left:1486px;top:513px;font-size:16px;line-height:18px;color:#111;font-weight:normal;white-space:nowrap;">Tetrabuty...</div>
<div style="position:absolute;left:1225px;width:200px;top:540px;text-align:right;font-size:16px;line-height:18px;color:#111;white-space:nowrap;">9.1204</div>
<div style="position:absolute;left:1433px;top:542px;width:11px;height:11px;background:linear-gradient(#f6f6f6,#dcdcdc);border:1px solid #8e8e8e;"></div>
<svg style="left:1433px;top:542px" width="11" height="11"><path d="M2.5 5.5H8.5M5.5 2.5V8.5" stroke="#1c2440" stroke-width="1.2"/></svg>
<div style="position:absolute;left:1273px;width:200px;top:540px;text-align:right;font-size:16px;line-height:18px;color:#111;white-space:nowrap;">1</div>
<div style="position:absolute;left:1434px;width:200px;top:540px;text-align:right;font-size:16px;line-height:18px;color:#111;white-space:nowrap;">94.64</div>
<div style="position:absolute;left:1491px;width:200px;top:540px;text-align:right;font-size:16px;line-height:18px;color:#111;white-space:nowrap;">70.85</div>
<div style="position:absolute;left:1710px;top:540px;font-size:16px;line-height:18px;color:#111;font-weight:normal;white-space:nowrap;">97.</div>
<div style="position:absolute;left:1486px;top:540px;font-size:16px;line-height:18px;color:#111;font-weight:normal;white-space:nowrap;">Praziqua...</div>
<div style="position:absolute;left:1225px;width:200px;top:567px;text-align:right;font-size:16px;line-height:18px;color:#111;white-space:nowrap;">9.6904</div>
<div style="position:absolute;left:1486px;top:567px;font-size:16px;line-height:18px;color:#111;font-weight:normal;white-space:nowrap;">No matc...</div>
<div style="position:absolute;left:1225px;width:200px;top:594px;text-align:right;font-size:16px;line-height:18px;color:#111;white-space:nowrap;">17.6475</div>
<div style="position:absolute;left:1486px;top:594px;font-size:16px;line-height:18px;color:#111;font-weight:normal;white-space:nowrap;">No matc...</div>
<div style="position:absolute;left:4px;top:802px;width:1344px;height:153px;background:#f0f0f0;"></div>
<div style="position:absolute;left:4px;top:802px;width:47px;height:30px;background:#f0f0f0;"></div>
<div style="position:absolute;left:51px;top:802px;width:1276px;height:23px;background:linear-gradient(#fbfbfb,#eeeeee);"></div>
<div style="position:absolute;left:51px;top:825px;width:1276px;height:7px;background:#ededed;"></div>
<div style="position:absolute;left:4px;top:825px;width:47px;height:1px;background:#cfcfcf;"></div>
<div style="position:absolute;left:4px;top:832px;width:1323px;height:1px;background:#d9d9d9;"></div>
<style>.sb sub,.sb sup{font-size:10px;line-height:0;} .sb sub{vertical-align:-3px;} .sb sup{vertical-align:5px;}</style>
<div style="position:absolute;left:51px;top:833px;width:1276px;height:24px;background:#fff;"></div>
<div style="position:absolute;left:4px;top:833px;width:47px;height:24px;background:#efefef;"></div>
<div style="position:absolute;left:4px;top:857px;width:1323px;height:1px;background:#d6d6d6;"></div>
<div style="position:absolute;left:4px;width:47px;top:837px;text-align:center;font-size:16px;line-height:18px;color:#111;">11</div>
<div class="sb" style="position:absolute;left:56.3px;top:837px;width:84.2px;overflow:hidden;font-size:16px;line-height:18px;color:#111;white-space:nowrap;">8.0051</div>
<div class="sb" style="position:absolute;left:146.5px;top:837px;width:48.1px;overflow:hidden;font-size:16px;line-height:18px;color:#111;white-space:nowrap;">1</div>
<div class="sb" style="position:absolute;left:200.6px;top:837px;width:97.6px;overflow:hidden;font-size:16px;line-height:18px;color:#111;white-space:nowrap;">3256491</div>
<div class="sb" style="position:absolute;left:304.2px;top:837px;width:126.0px;overflow:hidden;font-size:16px;line-height:18px;color:#111;white-space:nowrap;">9.49</div>
<div class="sb" style="position:absolute;left:436.2px;top:837px;width:117.9px;overflow:hidden;font-size:16px;line-height:18px;color:#111;white-space:nowrap;">65325128.6</div>
<div class="sb" style="position:absolute;left:560.1px;top:837px;width:84.2px;overflow:hidden;font-size:16px;line-height:18px;color:#111;white-space:nowrap;">0.8049</div>
<div class="sb" style="position:absolute;left:650.3px;top:837px;width:132.1px;overflow:hidden;font-size:16px;line-height:18px;color:#111;white-space:nowrap;">296.1027</div>
<div class="sb" style="position:absolute;left:788.4px;top:837px;width:173.9px;overflow:hidden;font-size:16px;line-height:18px;color:#111;white-space:nowrap;letter-spacing:0.45px;">Mebendazole</div>
<div class="sb" style="position:absolute;left:968.3px;top:837px;width:120.0px;overflow:hidden;font-size:16px;line-height:18px;color:#111;white-space:nowrap;">C<sub>16</sub>H<sub>13</sub>N<sub>3</sub>O<sub>3</sub></div>
<div class="sb" style="position:absolute;left:1094.3px;top:837px;width:83.4px;overflow:hidden;font-size:16px;line-height:18px;color:#111;white-space:nowrap;">11.28</div>
<div class="sb" style="position:absolute;left:1183.7px;top:837px;width:84.6px;overflow:hidden;font-size:16px;line-height:18px;color:#111;white-space:nowrap;">-0.83</div>
<div class="sb" style="position:absolute;left:1274.3px;top:837px;width:51.4px;overflow:hidden;font-size:16px;line-height:18px;color:#111;white-space:nowrap;">[M+H]<sup>+</sup></div>
<div style="position:absolute;left:51px;top:858px;width:1276px;height:24px;background:#efefef;"></div>
<div style="position:absolute;left:4px;top:858px;width:47px;height:24px;background:#efefef;"></div>
<div style="position:absolute;left:4px;top:882px;width:1323px;height:1px;background:#d6d6d6;"></div>
<div style="position:absolute;left:4px;width:47px;top:862px;text-align:center;font-size:16px;line-height:18px;color:#111;">12</div>
<div class="sb" style="position:absolute;left:56.3px;top:862px;width:84.2px;overflow:hidden;font-size:16px;line-height:18px;color:#111;white-space:nowrap;">8.7637</div>
<div class="sb" style="position:absolute;left:146.5px;top:862px;width:48.1px;overflow:hidden;font-size:16px;line-height:18px;color:#111;white-space:nowrap;">?</div>
<div class="sb" style="position:absolute;left:200.6px;top:862px;width:97.6px;overflow:hidden;font-size:16px;line-height:18px;color:#111;white-space:nowrap;">582843</div>
<div class="sb" style="position:absolute;left:304.2px;top:862px;width:126.0px;overflow:hidden;font-size:16px;line-height:18px;color:#111;white-space:nowrap;">1.70</div>
<div class="sb" style="position:absolute;left:436.2px;top:862px;width:117.9px;overflow:hidden;font-size:16px;line-height:18px;color:#111;white-space:nowrap;">38972832.4</div>
<div class="sb" style="position:absolute;left:560.1px;top:862px;width:84.2px;overflow:hidden;font-size:16px;line-height:18px;color:#111;white-space:nowrap;">0.3009</div>
<div class="sb" style="position:absolute;left:650.3px;top:862px;width:132.1px;overflow:hidden;font-size:16px;line-height:18px;color:#111;white-space:nowrap;">310.1409</div>
<div class="sb" style="position:absolute;left:788.4px;top:862px;width:173.9px;overflow:hidden;font-size:16px;line-height:18px;color:#111;white-space:nowrap;letter-spacing:0.45px;">Fluoxetine</div>
<div class="sb" style="position:absolute;left:968.3px;top:862px;width:120.0px;overflow:hidden;font-size:16px;line-height:18px;color:#111;white-space:nowrap;">C<sub>17</sub>H<sub>18</sub>F<sub>3</sub>NO</div>
<div class="sb" style="position:absolute;left:1094.3px;top:862px;width:83.4px;overflow:hidden;font-size:16px;line-height:18px;color:#111;white-space:nowrap;">73.18</div>
<div class="sb" style="position:absolute;left:1183.7px;top:862px;width:84.6px;overflow:hidden;font-size:16px;line-height:18px;color:#111;white-space:nowrap;">-1.48</div>
<div class="sb" style="position:absolute;left:1274.3px;top:862px;width:51.4px;overflow:hidden;font-size:16px;line-height:18px;color:#111;white-space:nowrap;">[M+H]<sup>+</sup></div>
<div style="position:absolute;left:51px;top:883px;width:1276px;height:24px;background:#fff;"></div>
<div style="position:absolute;left:4px;top:883px;width:47px;height:24px;background:#efefef;"></div>
<div style="position:absolute;left:4px;top:907px;width:1323px;height:1px;background:#d6d6d6;"></div>
<div style="position:absolute;left:4px;width:47px;top:887px;text-align:center;font-size:16px;line-height:18px;color:#111;">13</div>
<div class="sb" style="position:absolute;left:56.3px;top:887px;width:84.2px;overflow:hidden;font-size:16px;line-height:18px;color:#111;white-space:nowrap;">8.7856</div>
<div class="sb" style="position:absolute;left:146.5px;top:887px;width:48.1px;overflow:hidden;font-size:16px;line-height:18px;color:#111;white-space:nowrap;">?</div>
<div class="sb" style="position:absolute;left:200.6px;top:887px;width:97.6px;overflow:hidden;font-size:16px;line-height:18px;color:#111;white-space:nowrap;">1179209</div>
<div class="sb" style="position:absolute;left:304.2px;top:887px;width:126.0px;overflow:hidden;font-size:16px;line-height:18px;color:#111;white-space:nowrap;">3.44</div>
<div class="sb" style="position:absolute;left:436.2px;top:887px;width:117.9px;overflow:hidden;font-size:16px;line-height:18px;color:#111;white-space:nowrap;">1470729.0</div>
<div class="sb" style="position:absolute;left:560.1px;top:887px;width:84.2px;overflow:hidden;font-size:16px;line-height:18px;color:#111;white-space:nowrap;">0.3241</div>
<div class="sb" style="position:absolute;left:650.3px;top:887px;width:132.1px;overflow:hidden;font-size:16px;line-height:18px;color:#111;white-space:nowrap;">310.1409</div>
<div class="sb" style="position:absolute;left:788.4px;top:887px;width:173.9px;overflow:hidden;font-size:16px;line-height:18px;color:#111;white-space:nowrap;letter-spacing:0.45px;">Fluoxetine</div>
<div class="sb" style="position:absolute;left:968.3px;top:887px;width:120.0px;overflow:hidden;font-size:16px;line-height:18px;color:#111;white-space:nowrap;">C<sub>17</sub>H<sub>18</sub>F<sub>3</sub>NO</div>
<div class="sb" style="position:absolute;left:1094.3px;top:887px;width:83.4px;overflow:hidden;font-size:16px;line-height:18px;color:#111;white-space:nowrap;">73.22</div>
<div class="sb" style="position:absolute;left:1183.7px;top:887px;width:84.6px;overflow:hidden;font-size:16px;line-height:18px;color:#111;white-space:nowrap;">-1.48</div>
<div class="sb" style="position:absolute;left:1274.3px;top:887px;width:51.4px;overflow:hidden;font-size:16px;line-height:18px;color:#111;white-space:nowrap;">[M+H]<sup>+</sup></div>
<div style="position:absolute;left:51px;top:908px;width:1276px;height:24px;background:#efefef;"></div>
<div style="position:absolute;left:4px;top:908px;width:47px;height:24px;background:#efefef;"></div>
<div style="position:absolute;left:4px;top:932px;width:1323px;height:1px;background:#d6d6d6;"></div>
<div style="position:absolute;left:4px;width:47px;top:912px;text-align:center;font-size:16px;line-height:18px;color:#111;">14</div>
<div class="sb" style="position:absolute;left:56.3px;top:912px;width:84.2px;overflow:hidden;font-size:16px;line-height:18px;color:#111;white-space:nowrap;">8.7856</div>
<div class="sb" style="position:absolute;left:146.5px;top:912px;width:48.1px;overflow:hidden;font-size:16px;line-height:18px;color:#111;white-space:nowrap;">?</div>
<div class="sb" style="position:absolute;left:200.6px;top:912px;width:97.6px;overflow:hidden;font-size:16px;line-height:18px;color:#111;white-space:nowrap;">1179209</div>
<div class="sb" style="position:absolute;left:304.2px;top:912px;width:126.0px;overflow:hidden;font-size:16px;line-height:18px;color:#111;white-space:nowrap;">3.44</div>
<div class="sb" style="position:absolute;left:436.2px;top:912px;width:117.9px;overflow:hidden;font-size:16px;line-height:18px;color:#111;white-space:nowrap;">1470729.0</div>
<div class="sb" style="position:absolute;left:560.1px;top:912px;width:84.2px;overflow:hidden;font-size:16px;line-height:18px;color:#111;white-space:nowrap;">0.3241</div>
<div class="sb" style="position:absolute;left:650.3px;top:912px;width:132.1px;overflow:hidden;font-size:16px;line-height:18px;color:#111;white-space:nowrap;">406.1818</div>
<div class="sb" style="position:absolute;left:788.4px;top:912px;width:173.9px;overflow:hidden;font-size:16px;line-height:18px;color:#111;white-space:nowrap;letter-spacing:0.45px;">Nebivolol</div>
<div class="sb" style="position:absolute;left:968.3px;top:912px;width:120.0px;overflow:hidden;font-size:16px;line-height:18px;color:#111;white-space:nowrap;">C<sub>22</sub>H<sub>25</sub>F<sub>2</sub>NO<sub>4</sub></div>
<div class="sb" style="position:absolute;left:1094.3px;top:912px;width:83.4px;overflow:hidden;font-size:16px;line-height:18px;color:#111;white-space:nowrap;">67.21</div>
<div class="sb" style="position:absolute;left:1183.7px;top:912px;width:84.6px;overflow:hidden;font-size:16px;line-height:18px;color:#111;white-space:nowrap;">-1.52</div>
<div class="sb" style="position:absolute;left:1274.3px;top:912px;width:51.4px;overflow:hidden;font-size:16px;line-height:18px;color:#111;white-space:nowrap;">[M+H]<sup>+</sup></div>
<div style="position:absolute;left:51.3px;top:802px;width:1px;height:131px;background:#d8d8d8;"></div>
<div style="position:absolute;left:141.5px;top:802px;width:1px;height:131px;background:#d8d8d8;"></div>
<div style="position:absolute;left:195.6px;top:802px;width:1px;height:131px;background:#d8d8d8;"></div>
<div style="position:absolute;left:299.2px;top:802px;width:1px;height:131px;background:#d8d8d8;"></div>
<div style="position:absolute;left:431.2px;top:802px;width:1px;height:131px;background:#d8d8d8;"></div>
<div style="position:absolute;left:555.1px;top:802px;width:1px;height:131px;background:#d8d8d8;"></div>
<div style="position:absolute;left:645.3px;top:802px;width:1px;height:131px;background:#d8d8d8;"></div>
<div style="position:absolute;left:783.4px;top:802px;width:1px;height:131px;background:#d8d8d8;"></div>
<div style="position:absolute;left:963.3px;top:802px;width:1px;height:131px;background:#d8d8d8;"></div>
<div style="position:absolute;left:1089.3px;top:802px;width:1px;height:131px;background:#d8d8d8;"></div>
<div style="position:absolute;left:1178.7px;top:802px;width:1px;height:131px;background:#d8d8d8;"></div>
<div style="position:absolute;left:1269.3px;top:802px;width:1px;height:131px;background:#d8d8d8;"></div>
<div style="position:absolute;left:51px;top:933px;width:1276px;height:1px;background:#5aa0dc;"></div>
<div style="position:absolute;left:56.3px;top:806.5px;width:71.2px;overflow:hidden;font-size:16.5px;letter-spacing:0.45px;line-height:20px;color:#111;white-space:nowrap;">RT [min]</div>
<svg style="left:126.5px;top:806px" width="12" height="16"><path d="M6 0.5L11 15.5H1Z" fill="#000"/></svg>
<div style="position:absolute;left:146.5px;top:806.5px;width:35.1px;overflow:hidden;font-size:16.5px;letter-spacing:0.45px;line-height:20px;color:#111;white-space:nowrap;">Char</div>
<svg style="left:181.1px;top:806px" width="12" height="16"><path d="M6 0.5L11.5 7H0.5Z M0.5 8.5H11.5L6 15Z" fill="#000"/></svg>
<div style="position:absolute;left:200.6px;top:806.5px;width:84.6px;overflow:hidden;font-size:16.5px;letter-spacing:0.45px;line-height:20px;color:#111;white-space:nowrap;">Peak Area</div>
<svg style="left:284.7px;top:806px" width="12" height="16"><path d="M6 0.5L11.5 7H0.5Z M0.5 8.5H11.5L6 15Z" fill="#000"/></svg>
<div style="position:absolute;left:304.2px;top:806.5px;width:113.0px;overflow:hidden;font-size:16.5px;letter-spacing:0.45px;line-height:20px;color:#111;white-space:nowrap;">Peak Area [%]</div>
<svg style="left:416.7px;top:806px" width="12" height="16"><path d="M6 0.5L11.5 7H0.5Z M0.5 8.5H11.5L6 15Z" fill="#000"/></svg>
<div style="position:absolute;left:436.2px;top:806.5px;width:104.9px;overflow:hidden;font-size:16.5px;letter-spacing:0.45px;line-height:20px;color:#111;white-space:nowrap;">Peak Height</div>
<svg style="left:540.6px;top:806px" width="12" height="16"><path d="M6 0.5L11.5 7H0.5Z M0.5 8.5H11.5L6 15Z" fill="#000"/></svg>
<div style="position:absolute;left:560.1px;top:806.5px;width:71.2px;overflow:hidden;font-size:16.5px;letter-spacing:0.45px;line-height:20px;color:#111;white-space:nowrap;">FWHM [min]</div>
<svg style="left:630.8px;top:806px" width="12" height="16"><path d="M6 0.5L11.5 7H0.5Z M0.5 8.5H11.5L6 15Z" fill="#000"/></svg>
<div style="position:absolute;left:650.3px;top:806.5px;width:119.1px;overflow:hidden;font-size:16.5px;letter-spacing:0.45px;line-height:20px;color:#111;white-space:nowrap;">Base Ion [<i>m/z</i>]</div>
<svg style="left:768.9px;top:806px" width="12" height="16"><path d="M6 0.5L11.5 7H0.5Z M0.5 8.5H11.5L6 15Z" fill="#000"/></svg>
<div style="position:absolute;left:788.4px;top:806.5px;width:160.9px;overflow:hidden;font-size:16.5px;letter-spacing:0.45px;line-height:20px;color:#111;white-space:nowrap;">Annotated Name</div>
<svg style="left:948.8px;top:806px" width="12" height="16"><path d="M6 0.5L11.5 7H0.5Z M0.5 8.5H11.5L6 15Z" fill="#000"/></svg>
<div style="position:absolute;left:968.3px;top:806.5px;width:107.0px;overflow:hidden;font-size:16.5px;letter-spacing:0.45px;line-height:20px;color:#111;white-space:nowrap;">Molecular Formula</div>
<svg style="left:1074.8px;top:806px" width="12" height="16"><path d="M6 0.5L11.5 7H0.5Z M0.5 8.5H11.5L6 15Z" fill="#000"/></svg>
<div style="position:absolute;left:1094.3px;top:806.5px;width:70.4px;overflow:hidden;font-size:16.5px;letter-spacing:0.45px;line-height:20px;color:#111;white-space:nowrap;">Match Score</div>
<svg style="left:1164.2px;top:806px" width="12" height="16"><path d="M6 0.5L11.5 7H0.5Z M0.5 8.5H11.5L6 15Z" fill="#000"/></svg>
<div style="position:absolute;left:1183.7px;top:806.5px;width:71.6px;overflow:hidden;font-size:16.5px;letter-spacing:0.45px;line-height:20px;color:#111;white-space:nowrap;">Mass Accuracy</div>
<svg style="left:1254.8px;top:806px" width="12" height="16"><path d="M6 0.5L11.5 7H0.5Z M0.5 8.5H11.5L6 15Z" fill="#000"/></svg>
<div style="position:absolute;left:1274.3px;top:806.5px;width:51.4px;overflow:hidden;font-size:16.5px;letter-spacing:0.45px;line-height:20px;color:#111;white-space:nowrap;">Detected</div>
<svg style="left:0;top:825px" width="1330" height="8"><path d="M21 2H26M29 2H34" stroke="#444" stroke-width="1.2"/><path d="M58 1V3M66 1V3M73 1V3" stroke="#555" stroke-width="1"/><path d="M975 1V3H979M1005 1V3H1009M1020 1V3" stroke="#555" stroke-width="1"/><path d="M1277 1V3H1281M1290 3H1294M1297 1V3" stroke="#555" stroke-width="1"/></svg>
<div style="position:absolute;left:26px;top:942px;width:944px;height:6px;background:#878787;"></div>
<div style="position:absolute;left:1327px;top:802px;width:21px;height:131px;background:#f0f0f0;"></div>
<div style="position:absolute;left:1335px;top:866px;width:6px;height:21px;background:#8a8a8a;"></div>
<div style="position:absolute;left:1734px;top:0;width:1px;height:960px;background:#9a9a9a;"></div>
<div style="position:absolute;left:0;top:958px;width:1735px;height:2px;background:#979797;"></div>
<svg style="left:0;top:0" width="1735" height="960" viewBox="0 0 1735 960"><path d="M48.8 128V304.5" stroke="#111" stroke-width="1.4"/><path d="M37.5 297.5H49" stroke="#111" stroke-width="1.5"/><path d="M44.5 285.7H49" stroke="#111" stroke-width="1.3"/><path d="M44.5 273.8H49" stroke="#111" stroke-width="1.3"/><path d="M44.5 262.0H49" stroke="#111" stroke-width="1.3"/><path d="M44.5 250.1H49" stroke="#111" stroke-width="1.3"/><path d="M37.5 238.3H49" stroke="#111" stroke-width="1.5"/><path d="M44.5 226.5H49" stroke="#111" stroke-width="1.3"/><path d="M44.5 214.6H49" stroke="#111" stroke-width="1.3"/><path d="M44.5 202.8H49" stroke="#111" stroke-width="1.3"/><path d="M44.5 190.9H49" stroke="#111" stroke-width="1.3"/><path d="M37.5 179.1H49" stroke="#111" stroke-width="1.5"/><path d="M44.5 167.3H49" stroke="#111" stroke-width="1.3"/><path d="M44.5 155.4H49" stroke="#111" stroke-width="1.3"/><path d="M44.5 143.6H49" stroke="#111" stroke-width="1.3"/><path d="M44.5 131.7H49" stroke="#111" stroke-width="1.3"/><path d="M48.5 303.8H1348" stroke="#222" stroke-width="1.5"/><path d="M55.1 303.8V306.8" stroke="#111" stroke-width="1.3"/><path d="M61.1 303.8V309.2" stroke="#111" stroke-width="1.5"/><path d="M67.2 303.8V306.8" stroke="#111" stroke-width="1.3"/><path d="M73.3 303.8V306.8" stroke="#111" stroke-width="1.3"/><path d="M79.4 303.8V306.8" stroke="#111" stroke-width="1.3"/><path d="M85.4 303.8V306.8" stroke="#111" stroke-width="1.3"/><path d="M91.5 303.8V311.5" stroke="#111" stroke-width="1.6"/><path d="M97.6 303.8V306.8" stroke="#111" stroke-width="1.3"/><path d="M103.6 303.8V306.8" stroke="#111" stroke-width="1.3"/><path d="M109.7 303.8V306.8" stroke="#111" stroke-width="1.3"/><path d="M115.8 303.8V306.8" stroke="#111" stroke-width="1.3"/><path d="M121.9 303.8V309.2" stroke="#111" stroke-width="1.5"/><path d="M127.9 303.8V306.8" stroke="#111" stroke-width="1.3"/><path d="M134.0 303.8V306.8" stroke="#111" stroke-width="1.3"/><path d="M140.1 303.8V306.8" stroke="#111" stroke-width="1.3"/><path d="M146.2 303.8V306.8" stroke="#111" stroke-width="1.3"/><path d="M152.2 303.8V311.5" stroke="#111" stroke-width="1.6"/><path d="M158.3 303.8V306.8" stroke="#111" stroke-width="1.3"/><path d="M164.4 303.8V306.8" stroke="#111" stroke-width="1.3"/><path d="M170.5 303.8V306.8" stroke="#111" stroke-width="1.3"/><path d="M176.5 303.8V306.8" stroke="#111" stroke-width="1.3"/><path d="M182.6 303.8V309.2" stroke="#111" stroke-width="1.5"/><path d="M188.7 303.8V306.8" stroke="#111" stroke-width="1.3"/><path d="M194.8 303.8V306.8" stroke="#111" stroke-width="1.3"/><path d="M200.8 303.8V306.8" stroke="#111" stroke-width="1.3"/><path d="M206.9 303.8V306.8" stroke="#111" stroke-width="1.3"/><path d="M213.0 303.8V311.5" stroke="#111" stroke-width="1.6"/><path d="M219.1 303.8V306.8" stroke="#111" stroke-width="1.3"/><path d="M225.1 303.8V306.8" stroke="#111" stroke-width="1.3"/><path d="M231.2 303.8V306.8" stroke="#111" stroke-width="1.3"/><path d="M237.3 303.8V306.8" stroke="#111" stroke-width="1.3"/><path d="M243.3 303.8V309.2" stroke="#111" stroke-width="1.5"/><path d="M249.4 303.8V306.8" stroke="#111" stroke-width="1.3"/><path d="M255.5 303.8V306.8" stroke="#111" stroke-width="1.3"/><path d="M261.6 303.8V306.8" stroke="#111" stroke-width="1.3"/><path d="M267.6 303.8V306.8" stroke="#111" stroke-width="1.3"/><path d="M273.7 303.8V311.5" stroke="#111" stroke-width="1.6"/><path d="M279.8 303.8V306.8" stroke="#111" stroke-width="1.3"/><path d="M285.9 303.8V306.8" stroke="#111" stroke-width="1.3"/><path d="M291.9 303.8V306.8" stroke="#111" stroke-width="1.3"/><path d="M298.0 303.8V306.8" stroke="#111" stroke-width="1.3"/><path d="M304.1 303.8V309.2" stroke="#111" stroke-width="1.5"/><path d="M310.2 303.8V306.8" stroke="#111" stroke-width="1.3"/><path d="M316.2 303.8V306.8" stroke="#111" stroke-width="1.3"/><path d="M322.3 303.8V306.8" stroke="#111" stroke-width="1.3"/><path d="M328.4 303.8V306.8" stroke="#111" stroke-width="1.3"/><path d="M334.5 303.8V311.5" stroke="#111" stroke-width="1.6"/><path d="M340.5 303.8V306.8" stroke="#111" stroke-width="1.3"/><path d="M346.6 303.8V306.8" stroke="#111" stroke-width="1.3"/><path d="M352.7 303.8V306.8" stroke="#111" stroke-width="1.3"/><path d="M358.8 303.8V306.8" stroke="#111" stroke-width="1.3"/><path d="M364.8 303.8V309.2" stroke="#111" stroke-width="1.5"/><path d="M370.9 303.8V306.8" stroke="#111" stroke-width="1.3"/><path d="M377.0 303.8V306.8" stroke="#111" stroke-width="1.3"/><path d="M383.1 303.8V306.8" stroke="#111" stroke-width="1.3"/><path d="M389.1 303.8V306.8" stroke="#111" stroke-width="1.3"/><path d="M395.2 303.8V311.5" stroke="#111" stroke-width="1.6"/><path d="M401.3 303.8V306.8" stroke="#111" stroke-width="1.3"/><path d="M407.3 303.8V306.8" stroke="#111" stroke-width="1.3"/><path d="M413.4 303.8V306.8" stroke="#111" stroke-width="1.3"/><path d="M419.5 303.8V306.8" stroke="#111" stroke-width="1.3"/><path d="M425.6 303.8V309.2" stroke="#111" stroke-width="1.5"/><path d="M431.6 303.8V306.8" stroke="#111" stroke-width="1.3"/><path d="M437.7 303.8V306.8" stroke="#111" stroke-width="1.3"/><path d="M443.8 303.8V306.8" stroke="#111" stroke-width="1.3"/><path d="M449.9 303.8V306.8" stroke="#111" stroke-width="1.3"/><path d="M455.9 303.8V311.5" stroke="#111" stroke-width="1.6"/><path d="M462.0 303.8V306.8" stroke="#111" stroke-width="1.3"/><path d="M468.1 303.8V306.8" stroke="#111" stroke-width="1.3"/><path d="M474.2 303.8V306.8" stroke="#111" stroke-width="1.3"/><path d="M480.2 303.8V306.8" stroke="#111" stroke-width="1.3"/><path d="M486.3 303.8V309.2" stroke="#111" stroke-width="1.5"/><path d="M492.4 303.8V306.8" stroke="#111" stroke-width="1.3"/><path d="M498.5 303.8V306.8" stroke="#111" stroke-width="1.3"/><path d="M504.5 303.8V306.8" stroke="#111" stroke-width="1.3"/><path d="M510.6 303.8V306.8" stroke="#111" stroke-width="1.3"/><path d="M516.7 303.8V311.5" stroke="#111" stroke-width="1.6"/><path d="M522.8 303.8V306.8" stroke="#111" stroke-width="1.3"/><path d="M528.8 303.8V306.8" stroke="#111" stroke-width="1.3"/><path d="M534.9 303.8V306.8" stroke="#111" stroke-width="1.3"/><path d="M541.0 303.8V306.8" stroke="#111" stroke-width="1.3"/><path d="M547.0 303.8V309.2" stroke="#111" stroke-width="1.5"/><path d="M553.1 303.8V306.8" stroke="#111" stroke-width="1.3"/><path d="M559.2 303.8V306.8" stroke="#111" stroke-width="1.3"/><path d="M565.3 303.8V306.8" stroke="#111" stroke-width="1.3"/><path d="M571.3 303.8V306.8" stroke="#111" stroke-width="1.3"/><path d="M577.4 303.8V311.5" stroke="#111" stroke-width="1.6"/><path d="M583.5 303.8V306.8" stroke="#111" stroke-width="1.3"/><path d="M589.6 303.8V306.8" stroke="#111" stroke-width="1.3"/><path d="M595.6 303.8V306.8" stroke="#111" stroke-width="1.3"/><path d="M601.7 303.8V306.8" stroke="#111" stroke-width="1.3"/><path d="M607.8 303.8V309.2" stroke="#111" stroke-width="1.5"/><path d="M613.9 303.8V306.8" stroke="#111" stroke-width="1.3"/><path d="M619.9 303.8V306.8" stroke="#111" stroke-width="1.3"/><path d="M626.0 303.8V306.8" stroke="#111" stroke-width="1.3"/><path d="M632.1 303.8V306.8" stroke="#111" stroke-width="1.3"/><path d="M638.2 303.8V311.5" stroke="#111" stroke-width="1.6"/><path d="M644.2 303.8V306.8" stroke="#111" stroke-width="1.3"/><path d="M650.3 303.8V306.8" stroke="#111" stroke-width="1.3"/><path d="M656.4 303.8V306.8" stroke="#111" stroke-width="1.3"/><path d="M662.5 303.8V306.8" stroke="#111" stroke-width="1.3"/><path d="M668.5 303.8V309.2" stroke="#111" stroke-width="1.5"/><path d="M674.6 303.8V306.8" stroke="#111" stroke-width="1.3"/><path d="M680.7 303.8V306.8" stroke="#111" stroke-width="1.3"/><path d="M686.8 303.8V306.8" stroke="#111" stroke-width="1.3"/><path d="M692.8 303.8V306.8" stroke="#111" stroke-width="1.3"/><path d="M698.9 303.8V311.5" stroke="#111" stroke-width="1.6"/><path d="M705.0 303.8V306.8" stroke="#111" stroke-width="1.3"/><path d="M711.0 303.8V306.8" stroke="#111" stroke-width="1.3"/><path d="M717.1 303.8V306.8" stroke="#111" stroke-width="1.3"/><path d="M723.2 303.8V306.8" stroke="#111" stroke-width="1.3"/><path d="M729.3 303.8V309.2" stroke="#111" stroke-width="1.5"/><path d="M735.3 303.8V306.8" stroke="#111" stroke-width="1.3"/><path d="M741.4 303.8V306.8" stroke="#111" stroke-width="1.3"/><path d="M747.5 303.8V306.8" stroke="#111" stroke-width="1.3"/><path d="M753.6 303.8V306.8" stroke="#111" stroke-width="1.3"/><path d="M759.6 303.8V311.5" stroke="#111" stroke-width="1.6"/><path d="M765.7 303.8V306.8" stroke="#111" stroke-width="1.3"/><path d="M771.8 303.8V306.8" stroke="#111" stroke-width="1.3"/><path d="M777.9 303.8V306.8" stroke="#111" stroke-width="1.3"/><path d="M783.9 303.8V306.8" stroke="#111" stroke-width="1.3"/><path d="M790.0 303.8V309.2" stroke="#111" stroke-width="1.5"/><path d="M796.1 303.8V306.8" stroke="#111" stroke-width="1.3"/><path d="M802.2 303.8V306.8" stroke="#111" stroke-width="1.3"/><path d="M808.2 303.8V306.8" stroke="#111" stroke-width="1.3"/><path d="M814.3 303.8V306.8" stroke="#111" stroke-width="1.3"/><path d="M820.4 303.8V311.5" stroke="#111" stroke-width="1.6"/><path d="M826.5 303.8V306.8" stroke="#111" stroke-width="1.3"/><path d="M832.5 303.8V306.8" stroke="#111" stroke-width="1.3"/><path d="M838.6 303.8V306.8" stroke="#111" stroke-width="1.3"/><path d="M844.7 303.8V306.8" stroke="#111" stroke-width="1.3"/><path d="M850.8 303.8V309.2" stroke="#111" stroke-width="1.5"/><path d="M856.8 303.8V306.8" stroke="#111" stroke-width="1.3"/><path d="M862.9 303.8V306.8" stroke="#111" stroke-width="1.3"/><path d="M869.0 303.8V306.8" stroke="#111" stroke-width="1.3"/><path d="M875.0 303.8V306.8" stroke="#111" stroke-width="1.3"/><path d="M881.1 303.8V311.5" stroke="#111" stroke-width="1.6"/><path d="M887.2 303.8V306.8" stroke="#111" stroke-width="1.3"/><path d="M893.3 303.8V306.8" stroke="#111" stroke-width="1.3"/><path d="M899.3 303.8V306.8" stroke="#111" stroke-width="1.3"/><path d="M905.4 303.8V306.8" stroke="#111" stroke-width="1.3"/><path d="M911.5 303.8V309.2" stroke="#111" stroke-width="1.5"/><path d="M917.6 303.8V306.8" stroke="#111" stroke-width="1.3"/><path d="M923.6 303.8V306.8" stroke="#111" stroke-width="1.3"/><path d="M929.7 303.8V306.8" stroke="#111" stroke-width="1.3"/><path d="M935.8 303.8V306.8" stroke="#111" stroke-width="1.3"/><path d="M941.9 303.8V311.5" stroke="#111" stroke-width="1.6"/><path d="M947.9 303.8V306.8" stroke="#111" stroke-width="1.3"/><path d="M954.0 303.8V306.8" stroke="#111" stroke-width="1.3"/><path d="M960.1 303.8V306.8" stroke="#111" stroke-width="1.3"/><path d="M966.2 303.8V306.8" stroke="#111" stroke-width="1.3"/><path d="M972.2 303.8V309.2" stroke="#111" stroke-width="1.5"/><path d="M978.3 303.8V306.8" stroke="#111" stroke-width="1.3"/><path d="M984.4 303.8V306.8" stroke="#111" stroke-width="1.3"/><path d="M990.5 303.8V306.8" stroke="#111" stroke-width="1.3"/><path d="M996.5 303.8V306.8" stroke="#111" stroke-width="1.3"/><path d="M1002.6 303.8V311.5" stroke="#111" stroke-width="1.6"/><path d="M1008.7 303.8V306.8" stroke="#111" stroke-width="1.3"/><path d="M1014.7 303.8V306.8" stroke="#111" stroke-width="1.3"/><path d="M1020.8 303.8V306.8" stroke="#111" stroke-width="1.3"/><path d="M1026.9 303.8V306.8" stroke="#111" stroke-width="1.3"/><path d="M1033.0 303.8V309.2" stroke="#111" stroke-width="1.5"/><path d="M1039.0 303.8V306.8" stroke="#111" stroke-width="1.3"/><path d="M1045.1 303.8V306.8" stroke="#111" stroke-width="1.3"/><path d="M1051.2 303.8V306.8" stroke="#111" stroke-width="1.3"/><path d="M1057.3 303.8V306.8" stroke="#111" stroke-width="1.3"/><path d="M1063.3 303.8V311.5" stroke="#111" stroke-width="1.6"/><path d="M1069.4 303.8V306.8" stroke="#111" stroke-width="1.3"/><path d="M1075.5 303.8V306.8" stroke="#111" stroke-width="1.3"/><path d="M1081.6 303.8V306.8" stroke="#111" stroke-width="1.3"/><path d="M1087.6 303.8V306.8" stroke="#111" stroke-width="1.3"/><path d="M1093.7 303.8V309.2" stroke="#111" stroke-width="1.5"/><path d="M1099.8 303.8V306.8" stroke="#111" stroke-width="1.3"/><path d="M1105.9 303.8V306.8" stroke="#111" stroke-width="1.3"/><path d="M1111.9 303.8V306.8" stroke="#111" stroke-width="1.3"/><path d="M1118.0 303.8V306.8" stroke="#111" stroke-width="1.3"/><path d="M1124.1 303.8V311.5" stroke="#111" stroke-width="1.6"/><path d="M1130.2 303.8V306.8" stroke="#111" stroke-width="1.3"/><path d="M1136.2 303.8V306.8" stroke="#111" stroke-width="1.3"/><path d="M1142.3 303.8V306.8" stroke="#111" stroke-width="1.3"/><path d="M1148.4 303.8V306.8" stroke="#111" stroke-width="1.3"/><path d="M1154.5 303.8V309.2" stroke="#111" stroke-width="1.5"/><path d="M1160.5 303.8V306.8" stroke="#111" stroke-width="1.3"/><path d="M1166.6 303.8V306.8" stroke="#111" stroke-width="1.3"/><path d="M1172.7 303.8V306.8" stroke="#111" stroke-width="1.3"/><path d="M1178.7 303.8V306.8" stroke="#111" stroke-width="1.3"/><path d="M1184.8 303.8V311.5" stroke="#111" stroke-width="1.6"/><path d="M1190.9 303.8V306.8" stroke="#111" stroke-width="1.3"/><path d="M1197.0 303.8V306.8" stroke="#111" stroke-width="1.3"/><path d="M1203.0 303.8V306.8" stroke="#111" stroke-width="1.3"/><path d="M1209.1 303.8V306.8" stroke="#111" stroke-width="1.3"/><path d="M1215.2 303.8V309.2" stroke="#111" stroke-width="1.5"/><path d="M1221.3 303.8V306.8" stroke="#111" stroke-width="1.3"/><path d="M1227.3 303.8V306.8" stroke="#111" stroke-width="1.3"/><path d="M1233.4 303.8V306.8" stroke="#111" stroke-width="1.3"/><path d="M1239.5 303.8V306.8" stroke="#111" stroke-width="1.3"/><path d="M1245.6 303.8V311.5" stroke="#111" stroke-width="1.6"/><path d="M1251.6 303.8V306.8" stroke="#111" stroke-width="1.3"/><path d="M1257.7 303.8V306.8" stroke="#111" stroke-width="1.3"/><path d="M1263.8 303.8V306.8" stroke="#111" stroke-width="1.3"/><path d="M1269.9 303.8V306.8" stroke="#111" stroke-width="1.3"/><path d="M1275.9 303.8V309.2" stroke="#111" stroke-width="1.5"/><path d="M1282.0 303.8V306.8" stroke="#111" stroke-width="1.3"/><path d="M1288.1 303.8V306.8" stroke="#111" stroke-width="1.3"/><path d="M1294.2 303.8V306.8" stroke="#111" stroke-width="1.3"/><path d="M1300.2 303.8V306.8" stroke="#111" stroke-width="1.3"/><path d="M1306.3 303.8V311.5" stroke="#111" stroke-width="1.6"/><path d="M1312.4 303.8V306.8" stroke="#111" stroke-width="1.3"/><path d="M1318.4 303.8V306.8" stroke="#111" stroke-width="1.3"/><path d="M1324.5 303.8V306.8" stroke="#111" stroke-width="1.3"/><path d="M1330.6 303.8V306.8" stroke="#111" stroke-width="1.3"/><path d="M1336.7 303.8V309.2" stroke="#111" stroke-width="1.5"/><path d="M1342.7 303.8V306.8" stroke="#111" stroke-width="1.3"/><path d="M172.0 297.5 Q181.8 285.5 186.0 285.5 Q190.2 285.5 200.0 297.5Z" fill="#d4d4d4"/><path d="M258.0 297.5 Q267.1 287 271.0 287 Q274.9 287 284.0 297.5Z" fill="#d4d4d4"/><path d="M367.5 297.5 L367.7 297.4 L368.0 297.4 L368.3 297.2 L368.6 297.1 L368.9 296.8 L369.2 296.5 L369.5 296.0 L369.8 295.4 L370.1 294.7 L370.4 293.8 L370.7 293.0 L371.0 292.1 L371.2 291.2 L371.5 290.6 L371.8 290.1 L372.1 290.0 L372.4 290.1 L372.7 290.6 L373.0 291.2 L373.3 292.1 L373.6 293.0 L373.9 293.8 L374.2 294.7 L374.5 295.4 L374.7 296.0 L375.0 296.5 L375.3 296.8 L375.6 297.1 L375.9 297.2 L376.2 297.4 L376.5 297.4 L376.8 297.5Z" fill="#d8d8d8"/><path d="M360.5 297.5 L361.2 297.4 L361.9 297.4 L362.6 297.3 L363.4 297.1 L364.1 296.9 L364.8 296.6 L365.6 296.1 L366.3 295.6 L367.0 294.9 L367.7 294.1 L368.5 293.3 L369.2 292.4 L369.9 291.7 L370.7 291.0 L371.4 290.6 L372.1 290.5 L372.8 290.6 L373.6 291.0 L374.3 291.7 L375.0 292.4 L375.8 293.3 L376.5 294.1 L377.2 294.9 L377.9 295.6 L378.7 296.1 L379.4 296.6 L380.1 296.9 L380.9 297.1 L381.6 297.3 L382.3 297.4 L383.1 297.4 L383.8 297.5Z" fill="#dedede"/><path d="M400.4 297.5 L400.7 297.4 L400.9 297.3 L401.2 297.2 L401.4 297.0 L401.6 296.8 L401.9 296.4 L402.1 295.9 L402.4 295.2 L402.6 294.4 L402.9 293.5 L403.1 292.5 L403.3 291.5 L403.6 290.6 L403.8 289.8 L404.1 289.4 L404.3 289.2 L404.6 289.4 L404.8 289.8 L405.0 290.6 L405.3 291.5 L405.5 292.5 L405.8 293.5 L406.0 294.4 L406.3 295.2 L406.5 295.9 L406.7 296.4 L407.0 296.8 L407.2 297.0 L407.5 297.2 L407.7 297.3 L408.0 297.4 L408.2 297.5Z" fill="#d8d8d8"/><path d="M394.6 297.5 L395.2 297.4 L395.8 297.4 L396.4 297.3 L397.0 297.1 L397.6 296.9 L398.2 296.6 L398.8 296.1 L399.5 295.6 L400.1 294.9 L400.7 294.1 L401.3 293.3 L401.9 292.4 L402.5 291.7 L403.1 291.0 L403.7 290.6 L404.3 290.5 L404.9 290.6 L405.5 291.0 L406.1 291.7 L406.7 292.4 L407.3 293.3 L408.0 294.1 L408.6 294.9 L409.2 295.6 L409.8 296.1 L410.4 296.6 L411.0 296.9 L411.6 297.1 L412.2 297.3 L412.8 297.4 L413.4 297.4 L414.0 297.5Z" fill="#dedede"/><path d="M438.1 297.4 L438.3 297.3 L438.6 297.1 L438.8 296.8 L439.1 296.4 L439.3 295.7 L439.5 294.8 L439.8 293.5 L440.0 291.9 L440.3 290.0 L440.5 287.8 L440.8 285.4 L441.0 283.0 L441.2 280.8 L441.5 279.0 L441.7 277.9 L442.0 277.5 L442.2 277.9 L442.5 279.0 L442.7 280.8 L442.9 283.0 L443.2 285.4 L443.4 287.8 L443.7 290.0 L443.9 291.9 L444.2 293.5 L444.4 294.8 L444.6 295.7 L444.9 296.4 L445.1 296.8 L445.4 297.1 L445.6 297.3 L445.9 297.4Z" fill="#d8d8d8"/><path d="M432.3 297.5 L432.9 297.4 L433.5 297.4 L434.1 297.3 L434.7 297.1 L435.3 296.9 L435.9 296.6 L436.5 296.1 L437.1 295.6 L437.7 294.9 L438.3 294.1 L438.9 293.3 L439.5 292.4 L440.1 291.7 L440.8 291.0 L441.4 290.6 L442.0 290.5 L442.6 290.6 L443.2 291.0 L443.8 291.7 L444.4 292.4 L445.0 293.3 L445.6 294.1 L446.2 294.9 L446.8 295.6 L447.4 296.1 L448.0 296.6 L448.7 296.9 L449.3 297.1 L449.9 297.3 L450.5 297.4 L451.1 297.4 L451.7 297.5Z" fill="#dedede"/><path d="M463.7 297.3 L464.1 297.2 L464.5 297.0 L464.9 296.6 L465.2 296.0 L465.6 295.2 L466.0 294.0 L466.4 292.4 L466.8 290.3 L467.2 287.7 L467.6 284.8 L468.0 281.7 L468.4 278.6 L468.7 275.8 L469.1 273.5 L469.5 272.0 L469.9 271.5 L470.3 272.0 L470.7 273.5 L471.1 275.8 L471.5 278.6 L471.9 281.7 L472.2 284.8 L472.6 287.7 L473.0 290.3 L473.4 292.4 L473.8 294.0 L474.2 295.2 L474.6 296.0 L475.0 296.6 L475.4 297.0 L475.7 297.2 L476.1 297.3Z" fill="#d8d8d8"/><path d="M454.4 297.5 L455.3 297.4 L456.3 297.4 L457.3 297.3 L458.2 297.1 L459.2 296.9 L460.2 296.6 L461.2 296.1 L462.1 295.6 L463.1 294.9 L464.1 294.1 L465.1 293.3 L466.0 292.4 L467.0 291.7 L468.0 291.0 L468.9 290.6 L469.9 290.5 L470.9 290.6 L471.9 291.0 L472.8 291.7 L473.8 292.4 L474.8 293.3 L475.7 294.1 L476.7 294.9 L477.7 295.6 L478.7 296.1 L479.6 296.6 L480.6 296.9 L481.6 297.1 L482.5 297.3 L483.5 297.4 L484.5 297.4 L485.5 297.5Z" fill="#dedede"/><path d="M506.7 297.3 L507.0 297.1 L507.2 296.7 L507.4 296.2 L507.7 295.4 L507.9 294.1 L508.2 292.4 L508.4 290.0 L508.7 286.9 L508.9 283.2 L509.1 279.0 L509.4 274.5 L509.6 269.9 L509.9 265.8 L510.1 262.4 L510.4 260.3 L510.6 259.5 L510.8 260.3 L511.1 262.4 L511.3 265.8 L511.6 269.9 L511.8 274.5 L512.1 279.0 L512.3 283.2 L512.5 286.9 L512.8 290.0 L513.0 292.4 L513.3 294.1 L513.5 295.4 L513.8 296.2 L514.0 296.7 L514.3 297.1 L514.5 297.3Z" fill="#d8d8d8"/><path d="M500.9 297.5 L501.5 297.4 L502.1 297.4 L502.7 297.3 L503.3 297.1 L503.9 296.9 L504.5 296.6 L505.1 296.1 L505.7 295.6 L506.4 294.9 L507.0 294.1 L507.6 293.3 L508.2 292.4 L508.8 291.7 L509.4 291.0 L510.0 290.6 L510.6 290.5 L511.2 290.6 L511.8 291.0 L512.4 291.7 L513.0 292.4 L513.6 293.3 L514.3 294.1 L514.9 294.9 L515.5 295.6 L516.1 296.1 L516.7 296.6 L517.3 296.9 L517.9 297.1 L518.5 297.3 L519.1 297.4 L519.7 297.4 L520.3 297.5Z" fill="#dedede"/><path d="M572.8 297.2 L573.0 297.0 L573.3 296.6 L573.6 296.0 L573.9 294.9 L574.2 293.5 L574.5 291.3 L574.8 288.5 L575.1 284.8 L575.4 280.4 L575.7 275.4 L576.0 269.9 L576.3 264.5 L576.5 259.5 L576.8 255.5 L577.1 252.9 L577.4 252.0 L577.7 252.9 L578.0 255.5 L578.3 259.5 L578.6 264.5 L578.9 269.9 L579.2 275.4 L579.5 280.4 L579.8 284.8 L580.0 288.5 L580.3 291.3 L580.6 293.5 L580.9 294.9 L581.2 296.0 L581.5 296.6 L581.8 297.0 L582.1 297.2Z" fill="#d8d8d8"/><path d="M565.8 297.5 L566.5 297.4 L567.2 297.4 L567.9 297.3 L568.7 297.1 L569.4 296.9 L570.1 296.6 L570.9 296.1 L571.6 295.6 L572.3 294.9 L573.0 294.1 L573.8 293.3 L574.5 292.4 L575.2 291.7 L576.0 291.0 L576.7 290.6 L577.4 290.5 L578.1 290.6 L578.9 291.0 L579.6 291.7 L580.3 292.4 L581.1 293.3 L581.8 294.1 L582.5 294.9 L583.3 295.6 L584.0 296.1 L584.7 296.6 L585.4 296.9 L586.2 297.1 L586.9 297.3 L587.6 297.4 L588.4 297.4 L589.1 297.5Z" fill="#dedede"/><path d="M610.0 297.5 L610.2 297.4 L610.5 297.4 L610.7 297.3 L610.9 297.1 L611.2 296.9 L611.4 296.6 L611.7 296.1 L611.9 295.6 L612.2 294.9 L612.4 294.1 L612.6 293.3 L612.9 292.4 L613.1 291.7 L613.4 291.0 L613.6 290.6 L613.9 290.5 L614.1 290.6 L614.3 291.0 L614.6 291.7 L614.8 292.4 L615.1 293.3 L615.3 294.1 L615.6 294.9 L615.8 295.6 L616.1 296.1 L616.3 296.6 L616.5 296.9 L616.8 297.1 L617.0 297.3 L617.3 297.4 L617.5 297.4 L617.8 297.5Z" fill="#d8d8d8"/><path d="M604.1 297.5 L604.8 297.4 L605.4 297.4 L606.0 297.3 L606.6 297.1 L607.2 296.9 L607.8 296.6 L608.4 296.1 L609.0 295.6 L609.6 294.9 L610.2 294.1 L610.8 293.3 L611.4 292.4 L612.0 291.7 L612.6 291.0 L613.3 290.6 L613.9 290.5 L614.5 290.6 L615.1 291.0 L615.7 291.7 L616.3 292.4 L616.9 293.3 L617.5 294.1 L618.1 294.9 L618.7 295.6 L619.3 296.1 L619.9 296.6 L620.5 296.9 L621.2 297.1 L621.8 297.3 L622.4 297.4 L623.0 297.4 L623.6 297.5Z" fill="#dedede"/><path d="M620.1 297.4 L620.4 297.4 L620.7 297.3 L621.0 297.1 L621.3 296.9 L621.6 296.5 L621.9 296.0 L622.2 295.3 L622.5 294.4 L622.8 293.4 L623.0 292.1 L623.3 290.8 L623.6 289.5 L623.9 288.3 L624.2 287.3 L624.5 286.7 L624.8 286.5 L625.1 286.7 L625.4 287.3 L625.7 288.3 L626.0 289.5 L626.3 290.8 L626.5 292.1 L626.8 293.4 L627.1 294.4 L627.4 295.3 L627.7 296.0 L628.0 296.5 L628.3 296.9 L628.6 297.1 L628.9 297.3 L629.2 297.4 L629.5 297.4Z" fill="#d8d8d8"/><path d="M613.1 297.5 L613.9 297.4 L614.6 297.4 L615.3 297.3 L616.1 297.1 L616.8 296.9 L617.5 296.6 L618.2 296.1 L619.0 295.6 L619.7 294.9 L620.4 294.1 L621.2 293.3 L621.9 292.4 L622.6 291.7 L623.3 291.0 L624.1 290.6 L624.8 290.5 L625.5 290.6 L626.3 291.0 L627.0 291.7 L627.7 292.4 L628.4 293.3 L629.2 294.1 L629.9 294.9 L630.6 295.6 L631.4 296.1 L632.1 296.6 L632.8 296.9 L633.5 297.1 L634.3 297.3 L635.0 297.4 L635.7 297.4 L636.5 297.5Z" fill="#dedede"/><path d="M641.6 297.2 L641.8 296.9 L642.0 296.5 L642.3 295.7 L642.5 294.6 L642.8 292.9 L643.0 290.5 L643.3 287.3 L643.5 283.2 L643.7 278.2 L644.0 272.4 L644.2 266.3 L644.5 260.1 L644.7 254.5 L645.0 250.0 L645.2 247.0 L645.4 246.0 L645.7 247.0 L645.9 250.0 L646.2 254.5 L646.4 260.1 L646.7 266.3 L646.9 272.4 L647.1 278.2 L647.4 283.2 L647.6 287.3 L647.9 290.5 L648.1 292.9 L648.4 294.6 L648.6 295.7 L648.9 296.5 L649.1 296.9 L649.3 297.2Z" fill="#d8d8d8"/><path d="M635.7 297.5 L636.3 297.4 L636.9 297.4 L637.6 297.3 L638.2 297.1 L638.8 296.9 L639.4 296.6 L640.0 296.1 L640.6 295.6 L641.2 294.9 L641.8 294.1 L642.4 293.3 L643.0 292.4 L643.6 291.7 L644.2 291.0 L644.8 290.6 L645.4 290.5 L646.1 290.6 L646.7 291.0 L647.3 291.7 L647.9 292.4 L648.5 293.3 L649.1 294.1 L649.7 294.9 L650.3 295.6 L650.9 296.1 L651.5 296.6 L652.1 296.9 L652.7 297.1 L653.3 297.3 L654.0 297.4 L654.6 297.4 L655.2 297.5Z" fill="#dedede"/><path d="M676.2 297.4 L676.4 297.3 L676.7 297.1 L676.9 296.8 L677.2 296.4 L677.4 295.8 L677.6 294.9 L677.9 293.6 L678.1 292.1 L678.4 290.2 L678.6 288.0 L678.9 285.7 L679.1 283.3 L679.3 281.2 L679.6 279.5 L679.8 278.4 L680.1 278.0 L680.3 278.4 L680.6 279.5 L680.8 281.2 L681.0 283.3 L681.3 285.7 L681.5 288.0 L681.8 290.2 L682.0 292.1 L682.3 293.6 L682.5 294.9 L682.7 295.8 L683.0 296.4 L683.2 296.8 L683.5 297.1 L683.7 297.3 L684.0 297.4Z" fill="#d8d8d8"/><path d="M670.4 297.5 L671.0 297.4 L671.6 297.4 L672.2 297.3 L672.8 297.1 L673.4 296.9 L674.0 296.6 L674.6 296.1 L675.2 295.6 L675.8 294.9 L676.4 294.1 L677.0 293.3 L677.6 292.4 L678.2 291.7 L678.9 291.0 L679.5 290.6 L680.1 290.5 L680.7 290.6 L681.3 291.0 L681.9 291.7 L682.5 292.4 L683.1 293.3 L683.7 294.1 L684.3 294.9 L684.9 295.6 L685.5 296.1 L686.1 296.6 L686.8 296.9 L687.4 297.1 L688.0 297.3 L688.6 297.4 L689.2 297.4 L689.8 297.5Z" fill="#dedede"/><path d="M814.5 297.4 L814.9 297.4 L815.3 297.3 L815.6 297.2 L816.0 296.9 L816.4 296.6 L816.7 296.1 L817.1 295.5 L817.5 294.7 L817.8 293.7 L818.2 292.6 L818.6 291.4 L818.9 290.2 L819.3 289.1 L819.7 288.3 L820.0 287.7 L820.4 287.5 L820.7 287.7 L821.1 288.3 L821.5 289.1 L821.8 290.2 L822.2 291.4 L822.6 292.6 L822.9 293.7 L823.3 294.7 L823.7 295.5 L824.0 296.1 L824.4 296.6 L824.8 296.9 L825.1 297.2 L825.5 297.3 L825.8 297.4 L826.2 297.4Z" fill="#d6d6d6"/><path d="M836.2 297.3 L836.5 297.2 L836.9 296.9 L837.2 296.5 L837.6 295.9 L837.9 295.0 L838.2 293.6 L838.6 291.9 L838.9 289.6 L839.3 286.8 L839.6 283.6 L839.9 280.2 L840.3 276.8 L840.6 273.7 L841.0 271.2 L841.3 269.6 L841.6 269.0 L842.0 269.6 L842.3 271.2 L842.7 273.7 L843.0 276.8 L843.3 280.2 L843.7 283.6 L844.0 286.8 L844.4 289.6 L844.7 291.9 L845.0 293.6 L845.4 295.0 L845.7 295.9 L846.1 296.5 L846.4 296.9 L846.7 297.2 L847.1 297.3Z" fill="#d8d8d8"/><path d="M828.0 297.5 L828.9 297.4 L829.7 297.4 L830.6 297.3 L831.4 297.1 L832.3 296.9 L833.1 296.6 L834.0 296.1 L834.8 295.6 L835.7 294.9 L836.5 294.1 L837.4 293.3 L838.2 292.4 L839.1 291.7 L839.9 291.0 L840.8 290.6 L841.6 290.5 L842.5 290.6 L843.3 291.0 L844.2 291.7 L845.0 292.4 L845.9 293.3 L846.7 294.1 L847.6 294.9 L848.4 295.6 L849.3 296.1 L850.1 296.6 L851.0 296.9 L851.8 297.1 L852.7 297.3 L853.5 297.4 L854.4 297.4 L855.2 297.5Z" fill="#dedede"/><path d="M368.0 297.5 Q371.1 289 372.5 289 Q373.9 289 377.0 297.5Z" fill="#b4b4b4"/><path d="M410.0 297.5 Q413.5 291 415.0 291 Q416.5 291 420.0 297.5Z" fill="#d4d4d4"/><path d="M971.5 297.5L983.5 295.0L995.5 297.5Z" fill="#a8a8a8" fill-opacity="0.38"/><path d="M986.1 297.5L996.1 292.5L1006.1 297.5Z" fill="#a8a8a8" fill-opacity="0.38"/><path d="M1007.8 297.5L1018.6 287.7L1029.4 297.5Z" fill="#a8a8a8" fill-opacity="0.38"/><path d="M1021.8 297.5L1032.5 286.6L1043.2 297.5Z" fill="#a8a8a8" fill-opacity="0.38"/><path d="M1034.5 297.5L1043.4 286.2L1052.3 297.5Z" fill="#a8a8a8" fill-opacity="0.38"/><path d="M1042.8 297.5L1052.4 282.0L1062.0 297.5Z" fill="#a8a8a8" fill-opacity="0.38"/><path d="M1061.3 297.5L1068.8 285.5L1076.3 297.5Z" fill="#a8a8a8" fill-opacity="0.38"/><path d="M1070.0 297.5L1078.0 288.1L1086.0 297.5Z" fill="#a8a8a8" fill-opacity="0.38"/><path d="M1073.3 297.5L1082.6 281.4L1091.9 297.5Z" fill="#a8a8a8" fill-opacity="0.38"/><path d="M1080.5 297.5L1088.4 278.3L1096.3 297.5Z" fill="#a8a8a8" fill-opacity="0.38"/><path d="M1088.6 297.5L1099.3 279.2L1110.0 297.5Z" fill="#a8a8a8" fill-opacity="0.38"/><path d="M1105.0 297.5L1112.6 279.9L1120.2 297.5Z" fill="#a8a8a8" fill-opacity="0.38"/><path d="M1115.9 297.5L1123.5 286.1L1131.1 297.5Z" fill="#a8a8a8" fill-opacity="0.38"/><path d="M1131.6 297.5L1139.1 279.5L1146.6 297.5Z" fill="#a8a8a8" fill-opacity="0.38"/><path d="M1134.3 297.5L1144.8 270.5L1155.3 297.5Z" fill="#a8a8a8" fill-opacity="0.38"/><path d="M1145.0 297.5L1152.9 286.9L1160.8 297.5Z" fill="#a8a8a8" fill-opacity="0.38"/><path d="M1152.8 297.5L1163.3 274.4L1173.8 297.5Z" fill="#a8a8a8" fill-opacity="0.38"/><path d="M1162.9 297.5L1173.7 282.9L1184.5 297.5Z" fill="#a8a8a8" fill-opacity="0.38"/><path d="M1175.1 297.5L1184.8 282.6L1194.5 297.5Z" fill="#a8a8a8" fill-opacity="0.38"/><path d="M1182.1 297.5L1192.9 286.7L1203.7 297.5Z" fill="#a8a8a8" fill-opacity="0.38"/><path d="M1186.5 297.5L1197.4 280.6L1208.3 297.5Z" fill="#a8a8a8" fill-opacity="0.38"/><path d="M1198.4 297.5L1206.6 285.3L1214.8 297.5Z" fill="#a8a8a8" fill-opacity="0.38"/><path d="M1206.6 297.5L1214.3 274.0L1222.0 297.5Z" fill="#a8a8a8" fill-opacity="0.38"/><path d="M1212.2 297.5L1219.5 279.8L1226.8 297.5Z" fill="#a8a8a8" fill-opacity="0.38"/><path d="M1218.2 297.5L1227.6 277.4L1237.0 297.5Z" fill="#a8a8a8" fill-opacity="0.38"/><path d="M1226.8 297.5L1236.5 284.1L1246.2 297.5Z" fill="#a8a8a8" fill-opacity="0.38"/><path d="M1236.0 297.5L1244.2 284.3L1252.4 297.5Z" fill="#a8a8a8" fill-opacity="0.38"/><path d="M1240.1 297.5L1249.0 281.5L1257.9 297.5Z" fill="#a8a8a8" fill-opacity="0.38"/><path d="M1245.4 297.5L1254.3 288.7L1263.2 297.5Z" fill="#a8a8a8" fill-opacity="0.38"/><path d="M1257.5 297.5L1264.7 291.0L1271.9 297.5Z" fill="#a8a8a8" fill-opacity="0.38"/><path d="M1264.1 297.5L1271.2 285.7L1278.3 297.5Z" fill="#a8a8a8" fill-opacity="0.38"/><path d="M1268.9 297.5L1279.3 287.2L1289.7 297.5Z" fill="#a8a8a8" fill-opacity="0.38"/><path d="M1288.0 297.5L1298.2 278.9L1308.4 297.5Z" fill="#a8a8a8" fill-opacity="0.38"/><path d="M1291.0 297.5L1298.0 285.0L1305.0 297.5Z" fill="#a8a8a8" fill-opacity="0.38"/><path d="M119 297.5H1306" stroke="#d4d4d4" stroke-width="1.2"/><path d="M430 297.6H720" stroke="#5a5a66" stroke-width="1.4"/><defs><linearGradient id="bl" gradientUnits="userSpaceOnUse" x1="945" y1="0" x2="1300" y2="0"><stop offset="0" stop-color="#c8c8c8"/><stop offset="0.15" stop-color="#444"/><stop offset="0.85" stop-color="#333"/><stop offset="1" stop-color="#bbb"/></linearGradient></defs><path d="M945 297.6H1300" stroke="url(#bl)" stroke-width="1.4"/><path d="M700 297.6H760M1300 297.6H1306" stroke="#9a9a9a" stroke-width="1.4"/><path d="M623 298.3H640" stroke="#3a3aa0" stroke-width="3"/><path d="M634 129V303" stroke="#8c8c8c" stroke-width="1.2"/><path d="M623 133.5H640M623.5 133V137M639.5 133V137" stroke="#3a3a8a" stroke-width="1.3"/><defs><linearGradient id="mp" x1="0" y1="0" x2="0" y2="1"><stop offset="0" stop-color="#b05a40"/><stop offset="0.5" stop-color="#a06070"/><stop offset="0.72" stop-color="#8c8cd8"/><stop offset="1" stop-color="#8a8ae0"/></linearGradient></defs><path d="M627.8 297.5 Q630.3 296 630.9 290 L630.9 253.4 L631.0 250.3 L631.1 247.3 L631.2 244.1 L631.4 241.0 L631.5 237.8 L631.6 234.5 L631.7 231.2 L631.8 227.9 L632.0 224.5 L632.1 221.1 L632.2 217.7 L632.3 214.2 L632.5 210.7 L632.6 207.2 L632.7 203.7 L632.8 200.1 L632.9 196.4 L633.1 192.8 L633.2 189.1 L633.3 185.4 L633.4 181.7 L633.5 177.9 L633.7 174.1 L633.8 170.3 L633.9 166.5 L633.9 166.5 L634.0 170.3 L634.2 174.1 L634.3 177.9 L634.4 181.7 L634.5 185.4 L634.6 189.1 L634.8 192.8 L634.9 196.4 L635.0 200.1 L635.1 203.7 L635.2 207.2 L635.4 210.7 L635.5 214.2 L635.6 217.7 L635.7 221.1 L635.9 224.5 L636.0 227.9 L636.1 231.2 L636.2 234.5 L636.3 237.8 L636.5 241.0 L636.6 244.2 L636.7 247.3 L636.8 250.4 L636.9 290 Q637.6 296 641.2 297.5Z" fill="url(#mp)"/><path d="M91.5 286.5 L91.5 282.1 L94.8 284.4 L97.9 282.0 L101.3 283.7 L104.5 281.9 L108.3 283.6 L111.1 282.6 L115.0 284.2 L117.2 281.4 L121.3 284.2 L124.8 282.5 L126.9 284.0 L129.2 282.5 L131.8 283.5 L134.9 282.1 L138.9 284.0 L142.3 282.1 L145.9 284.0 L148.6 281.4 L152.8 284.3 L156.5 282.3 L159.1 283.8 L161.4 281.7 L164.3 284.3 L167.3 281.5 L171.2 283.5 L173.8 281.5 L176.9 287.8 L179.9 285.8 L183.3 284.3 L186.0 282.6 L188.9 284.5 L192.6 282.5 L195.3 283.6 L197.5 281.7 L200.0 284.1 L203.1 282.5 L206.8 283.6 L210.3 282.5 L213.3 283.7 L216.0 281.4 L219.8 283.8 L223.8 282.4 L226.8 284.4 L230.3 282.6 L234.5 283.7 L237.2 281.7 L240.0 283.8 L242.3 282.6 L245.7 283.7 L249.1 282.2 L252.2 284.5 L255.3 282.0 L259.3 283.7 L261.7 281.5 L265.6 283.7 L268.1 280.1 L272.2 283.3 L274.1 285.2 L275.9 286.6 L277.7 287.7 L279.5 288.3 L281.4 288.1 L283.2 288.0 L285.0 288.7 L286.8 288.2 L288.6 288.6 L290.5 288.3 L292.3 288.7 L294.1 288.5 L295.9 288.4 L297.8 288.3 L299.6 288.7 L301.4 288.3 L303.2 288.4 L305.0 288.6 L306.9 288.9 L308.7 288.7 L310.5 288.5 L312.3 289.0 L314.2 288.5 L316.0 288.4 L317.8 288.6 L319.6 288.7 L321.4 288.5 L323.3 288.6 L325.1 288.7 L326.9 288.9 L328.7 288.6 L330.6 288.8 L332.4 289.2 L334.2 289.3 L336.0 289.1 L337.8 289.1 L339.7 289.1 L341.5 288.8 L343.3 288.7 L345.1 288.7 L347.0 289.4 L348.8 289.3 L350.6 289.5 L352.4 288.8 L354.2 289.3 L356.1 289.2 L357.9 289.4 L359.7 289.1 L361.5 289.6 L363.4 289.0 L365.2 289.5 L367.0 289.6 L368.8 288.7 L370.6 285.7 L372.5 284.2 L374.3 287.0 L376.1 289.3 L377.9 289.3 L379.8 289.1 L381.6 288.0 L383.4 287.3 L385.2 288.2 L387.0 289.5 L388.9 289.7 L390.7 289.6 L392.5 289.6 L394.3 289.4 L396.2 289.6 L398.0 289.6 L399.8 289.1 L401.6 288.3 L403.4 284.5 L405.3 284.6 L407.1 288.5 L408.9 289.4 L410.7 289.7 L412.6 289.6 L414.4 289.4 L416.2 289.2 L418.0 287.0 L419.8 286.7 L421.7 287.7 L423.5 289.3 L425.3 289.5 L427.1 289.3 L429.0 289.6 L430.8 289.5 L432.6 289.6 L434.4 289.8 L436.2 289.3 L436.5 289.1 L436.7 289.3 L437.0 289.6 L437.2 289.2 L437.5 289.1 L437.7 289.5 L437.9 289.1 L438.2 288.7 L438.4 288.7 L438.7 287.9 L438.9 287.5 L439.2 286.4 L439.4 285.6 L439.6 284.7 L439.9 283.5 L440.1 282.1 L440.4 280.2 L440.6 278.8 L440.9 277.1 L441.1 275.6 L441.4 274.8 L441.6 274.2 L441.8 273.8 L442.1 273.7 L442.3 274.2 L442.6 274.5 L442.8 275.5 L443.1 277.0 L443.3 278.4 L443.5 279.9 L443.8 281.6 L444.0 283.2 L444.3 284.4 L444.5 285.4 L444.8 286.7 L445.0 287.6 L445.2 287.9 L445.5 288.1 L445.7 288.4 L446.0 289.3 L446.2 288.9 L446.5 289.4 L446.7 289.4 L446.9 289.3 L447.2 289.6 L447.4 289.1 L447.7 289.2 L447.9 289.4 L448.2 289.1 L448.4 289.6 L448.6 289.2 L448.9 289.0 L449.1 288.9 L449.4 289.2 L451.2 287.9 L453.0 287.1 L454.8 288.2 L456.7 289.4 L458.5 289.8 L460.3 289.6 L462.1 289.2 L463.9 288.4 L464.2 287.9 L464.4 287.4 L464.7 287.3 L464.9 287.0 L465.2 286.0 L465.4 285.4 L465.6 284.7 L465.9 284.0 L466.1 282.9 L466.4 281.9 L466.6 280.9 L466.9 279.4 L467.1 278.4 L467.3 277.2 L467.6 275.3 L467.8 274.5 L468.1 273.1 L468.3 271.5 L468.6 270.6 L468.8 269.8 L469.0 269.1 L469.3 268.1 L469.5 267.8 L469.8 267.8 L470.0 267.7 L470.3 268.0 L470.5 268.1 L470.7 268.9 L471.0 269.4 L471.2 270.7 L471.5 271.9 L471.7 272.9 L472.0 274.3 L472.2 275.2 L472.4 277.0 L472.7 278.4 L472.9 279.7 L473.2 280.6 L473.4 282.0 L473.7 282.7 L473.9 284.1 L474.1 284.9 L474.4 285.4 L474.6 285.9 L474.9 286.7 L475.1 287.3 L475.4 287.9 L475.6 288.1 L475.9 288.1 L476.1 288.9 L476.3 288.5 L476.6 289.2 L476.8 288.9 L477.1 289.1 L477.3 289.5 L479.1 289.2 L481.0 289.3 L482.8 289.5 L484.6 289.7 L486.4 289.7 L488.2 289.6 L490.1 289.8 L491.9 289.5 L493.7 289.8 L495.5 289.2 L497.4 289.3 L499.2 289.5 L501.0 289.4 L502.8 289.7 L504.6 289.6 L504.9 289.5 L505.1 289.7 L505.4 289.5 L505.6 289.2 L505.9 289.2 L506.1 289.3 L506.3 289.1 L506.6 288.3 L506.8 288.2 L507.1 287.6 L507.3 286.3 L507.6 285.0 L507.8 283.1 L508.0 281.3 L508.3 278.9 L508.5 276.2 L508.8 272.8 L509.0 270.2 L509.3 266.6 L509.5 263.3 L509.7 260.8 L510.0 258.3 L510.2 256.5 L510.5 255.8 L510.7 255.3 L511.0 256.4 L511.2 258.0 L511.4 260.6 L511.7 263.4 L511.9 266.1 L512.2 269.5 L512.4 272.5 L512.7 275.8 L512.9 278.9 L513.1 281.4 L513.4 283.1 L513.6 284.7 L513.9 285.9 L514.1 287.2 L514.4 288.2 L514.6 288.2 L514.8 289.0 L515.1 288.7 L515.3 289.0 L515.6 289.1 L515.8 289.5 L516.1 289.3 L516.3 289.4 L516.5 289.6 L516.8 289.2 L517.0 289.7 L517.3 289.2 L517.5 289.5 L517.8 289.3 L518.0 289.3 L519.8 289.5 L521.6 289.5 L523.5 289.4 L525.3 289.4 L527.1 289.5 L528.9 289.3 L530.8 289.3 L532.6 289.6 L534.4 289.6 L536.2 289.5 L538.0 289.7 L539.9 289.6 L541.7 289.7 L543.5 289.3 L545.3 289.7 L547.2 289.7 L549.0 289.8 L550.8 289.1 L552.6 287.7 L554.4 288.8 L556.3 289.2 L558.1 289.8 L559.9 289.8 L561.7 289.2 L563.6 289.3 L565.4 289.7 L567.2 289.3 L569.0 289.2 L570.8 289.7 L571.1 289.3 L571.3 289.5 L571.6 289.0 L571.8 289.1 L572.1 289.1 L572.3 288.4 L572.5 288.1 L572.8 288.0 L573.0 287.5 L573.3 286.7 L573.5 285.0 L573.8 284.0 L574.0 282.5 L574.2 280.4 L574.5 278.2 L574.7 275.3 L575.0 272.3 L575.2 269.2 L575.5 265.8 L575.7 262.9 L575.9 259.5 L576.2 256.5 L576.4 253.4 L576.7 251.1 L576.9 249.3 L577.2 248.6 L577.4 248.3 L577.7 248.6 L577.9 249.1 L578.1 250.8 L578.4 253.7 L578.6 256.1 L578.9 259.4 L579.1 262.4 L579.4 265.8 L579.6 269.1 L579.8 272.2 L580.1 275.3 L580.3 277.5 L580.6 280.3 L580.8 282.4 L581.1 283.6 L581.3 285.1 L581.5 286.4 L581.8 287.1 L582.0 287.6 L582.3 288.1 L582.5 288.7 L582.8 288.6 L583.0 289.4 L583.2 289.5 L583.5 289.5 L583.7 289.6 L584.0 289.5 L584.2 289.4 L584.5 289.5 L584.7 289.5 L584.9 289.8 L586.8 289.7 L588.6 289.3 L590.4 289.8 L592.2 289.7 L594.1 289.7 L595.9 289.7 L597.7 289.4 L599.5 289.8 L601.3 289.8 L603.2 289.6 L605.0 289.7 L606.8 289.7 L608.6 289.4 L610.5 289.3 L612.3 286.3 L614.1 284.4 L615.9 287.5 L617.7 289.0 L618.0 289.3 L618.2 289.5 L618.5 289.5 L618.7 289.2 L619.0 289.7 L619.2 289.5 L619.4 289.3 L619.7 289.4 L619.9 289.3 L620.2 289.2 L620.4 288.9 L620.7 289.2 L620.9 288.7 L621.1 288.4 L621.4 288.1 L621.6 287.9 L621.9 286.7 L622.1 286.5 L622.4 286.0 L622.6 285.0 L622.8 284.4 L623.1 283.4 L623.3 282.8 L623.6 282.2 L623.8 281.4 L624.1 281.0 L624.3 281.1 L624.5 280.6 L624.8 280.5 L625.0 280.9 L625.3 280.8 L625.5 281.5 L625.8 281.8 L626.0 282.5 L626.2 282.6 L626.5 283.7 L626.7 284.5 L627.0 284.8 L627.2 286.1 L627.5 286.2 L627.7 287.0 L627.9 287.2 L628.2 287.9 L628.4 288.3 L628.7 288.3 L628.9 289.1 L629.2 287.9 L629.4 284.5 L629.6 280.4 L629.9 275.6 L630.1 270.4 L630.4 265.3 L630.6 259.6 L630.9 253.5 L631.1 247.7 L631.3 241.2 L631.6 234.5 L631.8 228.1 L632.1 221.2 L632.3 214.4 L632.6 207.7 L632.8 200.3 L633.0 193.4 L633.3 186.0 L633.5 178.0 L633.8 171.1 L633.9 166.5 L634.0 170.3 L634.3 177.2 L634.5 185.3 L634.7 192.4 L635.0 199.7 L635.2 207.2 L635.5 213.7 L635.7 220.8 L636.0 227.9 L636.2 234.4 L636.4 240.7 L636.7 247.3 L636.9 253.3 L637.2 259.1 L637.4 264.5 L637.7 270.3 L637.9 275.3 L638.1 279.9 L638.4 284.2 L638.6 288.1 L638.9 289.2 L639.1 289.5 L639.4 289.6 L639.6 289.4 L639.8 289.3 L640.1 289.5 L640.3 289.3 L640.6 289.4 L640.8 289.1 L641.1 289.1 L641.3 288.7 L641.5 287.9 L641.8 286.7 L642.0 285.4 L642.3 284.4 L642.5 282.3 L642.8 279.6 L643.0 276.4 L643.2 272.7 L643.5 268.9 L643.7 264.4 L644.0 259.8 L644.2 255.3 L644.5 251.2 L644.7 247.1 L645.0 244.3 L645.2 243.0 L645.4 242.3 L645.7 242.8 L645.9 243.9 L646.2 246.7 L646.4 250.4 L646.7 254.7 L646.9 259.4 L647.1 263.6 L647.4 268.4 L647.6 272.2 L647.9 275.8 L648.1 279.4 L648.4 281.9 L648.6 284.0 L648.8 285.5 L649.1 286.8 L649.3 287.5 L649.6 288.2 L649.8 288.9 L650.1 289.3 L650.3 288.9 L650.5 289.1 L650.8 289.6 L651.0 289.5 L651.3 289.7 L651.5 289.3 L651.8 289.4 L652.0 289.3 L652.2 289.7 L652.5 289.4 L652.7 289.6 L653.0 289.8 L654.8 289.4 L656.6 289.5 L658.4 289.7 L660.3 289.8 L662.1 289.4 L663.9 289.4 L665.7 289.2 L667.5 289.8 L669.4 289.2 L671.2 289.2 L673.0 289.5 L673.3 289.5 L673.5 289.6 L673.7 289.4 L674.0 289.7 L674.2 289.2 L674.5 289.3 L674.7 289.6 L675.0 289.2 L675.2 289.3 L675.4 289.5 L675.7 289.4 L675.9 289.0 L676.2 288.7 L676.4 288.5 L676.7 288.4 L676.9 287.7 L677.1 286.8 L677.4 286.4 L677.6 285.3 L677.9 284.4 L678.1 283.0 L678.4 281.6 L678.6 279.8 L678.8 278.5 L679.1 276.8 L679.3 275.6 L679.6 274.7 L679.8 274.5 L680.1 274.3 L680.3 274.0 L680.5 274.6 L680.8 275.5 L681.0 276.7 L681.3 278.1 L681.5 279.6 L681.8 280.9 L682.0 282.6 L682.2 284.1 L682.5 285.2 L682.7 286.4 L683.0 287.1 L683.2 287.5 L683.5 288.4 L683.7 288.9 L683.9 288.7 L684.2 288.8 L684.4 289.3 L684.7 289.4 L684.9 289.5 L685.2 289.8 L685.4 289.6 L685.6 289.7 L685.9 289.2 L686.1 289.5 L686.4 289.7 L686.6 289.2 L686.9 289.2 L687.1 289.7 L687.3 289.8 L687.6 289.2 L689.4 289.6 L691.2 289.3 L693.1 289.7 L694.9 289.6 L696.7 289.3 L698.5 289.3 L700.3 289.7 L702.2 289.5 L704.0 289.7 L705.8 289.4 L707.6 289.4 L709.5 289.8 L711.3 289.6 L713.1 289.5 L714.9 289.5 L716.7 289.7 L718.6 289.6 L720.4 289.8 L722.2 289.4 L724.0 289.7 L725.9 289.6 L727.7 289.7 L729.5 289.7 L731.3 289.7 L733.1 289.8 L735.0 289.8 L736.8 289.6 L738.6 289.5 L740.4 289.6 L742.3 289.7 L744.1 289.4 L745.9 289.4 L747.7 289.3 L749.5 289.7 L751.4 289.8 L753.2 289.4 L755.0 289.3 L756.8 289.3 L758.7 289.4 L760.5 289.4 L762.3 289.8 L764.1 289.2 L765.9 289.4 L767.8 289.2 L769.6 289.6 L771.4 289.7 L773.2 289.3 L775.1 289.2 L776.9 289.4 L778.7 289.3 L780.5 289.1 L782.3 288.1 L784.2 288.0 L786.0 288.3 L787.8 288.8 L789.6 289.1 L791.5 289.6 L793.3 289.5 L795.1 289.2 L796.9 289.1 L798.7 288.8 L800.6 288.4 L802.4 288.7 L804.2 288.6 L806.0 289.1 L807.9 289.5 L809.7 289.4 L811.5 289.3 L813.3 289.8 L813.6 289.8 L813.8 289.4 L814.1 289.5 L814.3 289.8 L814.5 289.5 L814.8 289.3 L815.0 289.2 L815.3 289.8 L815.5 289.7 L815.8 289.4 L816.0 289.5 L816.2 289.5 L816.5 289.3 L816.7 289.8 L817.0 286.8 L817.2 282.3 L817.5 277.4 L817.7 272.5 L817.9 266.9 L818.2 261.4 L818.4 255.2 L818.7 248.9 L818.9 242.1 L819.2 235.4 L819.4 228.7 L819.6 221.6 L819.9 214.9 L820.1 207.3 L820.4 200.0 L820.4 199.5 L820.6 206.9 L820.9 213.7 L821.1 221.1 L821.3 227.8 L821.6 235.1 L821.8 241.3 L822.1 248.4 L822.3 254.7 L822.6 260.8 L822.8 266.1 L823.0 271.8 L823.3 277.4 L823.5 281.7 L823.8 286.2 L824.0 289.4 L824.3 289.8 L824.5 289.6 L824.7 289.8 L825.0 289.4 L825.2 289.7 L825.5 289.4 L825.7 289.8 L826.0 289.2 L826.2 289.7 L826.4 289.3 L826.7 289.5 L826.9 289.5 L827.2 289.3 L827.4 289.7 L827.7 289.4 L827.9 289.4 L829.7 289.2 L831.5 289.4 L833.4 289.5 L835.2 289.4 L835.4 289.1 L835.7 289.2 L835.9 288.6 L836.2 288.5 L836.4 288.3 L836.6 288.3 L836.9 287.7 L837.1 287.0 L837.4 285.9 L837.6 285.3 L837.9 284.6 L838.1 283.2 L838.3 282.2 L838.6 280.7 L838.8 278.9 L839.1 278.0 L839.3 276.2 L839.6 274.1 L839.8 272.7 L840.0 270.8 L840.3 269.4 L840.5 268.1 L840.8 266.8 L841.0 265.9 L841.3 265.3 L841.5 265.2 L841.7 264.9 L842.0 265.1 L842.2 266.1 L842.5 266.7 L842.7 268.3 L843.0 269.4 L843.2 271.0 L843.4 272.3 L843.7 274.4 L843.9 275.5 L844.2 277.2 L844.4 278.8 L844.7 280.7 L844.9 282.1 L845.1 283.0 L845.4 284.3 L845.6 285.6 L845.9 286.2 L846.1 286.6 L846.4 287.2 L846.6 287.7 L846.9 288.0 L847.1 288.5 L847.3 288.5 L847.6 289.3 L847.8 289.1 L848.1 289.3 L848.3 289.4 L848.6 289.6 L848.8 289.6 L849.0 289.4 L850.9 289.4 L852.7 289.4 L854.5 289.2 L856.3 289.4 L858.1 289.6 L860.0 289.8 L861.8 289.7 L863.6 289.6 L865.4 289.2 L867.3 287.6 L869.1 286.9 L870.9 288.0 L872.7 289.3 L874.5 289.2 L876.4 289.4 L878.2 289.5 L880.0 289.7 L881.8 289.7 L883.7 289.6 L885.5 289.3 L887.3 289.7 L889.1 289.8 L890.9 289.5 L892.8 289.4 L894.6 289.5 L896.4 289.2 L898.2 289.6 L900.1 289.8 L901.9 289.5 L903.7 289.7 L905.5 289.7 L907.3 289.3 L909.2 289.8 L911.0 289.6 L912.8 289.3 L914.6 289.2 L916.5 289.3 L918.3 289.6 L920.1 289.6 L921.9 289.4 L923.7 289.8 L925.6 289.4 L927.4 289.5 L929.2 289.2 L931.0 289.8 L932.9 289.2 L934.7 289.8 L936.5 289.5 L938.3 289.5 L940.1 289.5 L942.0 289.3 L943.8 289.8 L945.6 289.8 L947.4 289.7 L949.3 289.6 L951.1 289.2 L952.9 289.7 L954.7 289.4 L956.5 289.8 L958.4 289.3 L960.2 289.6 L962.0 289.7 L963.8 289.3 L965.7 289.5 L967.5 289.2 L969.3 289.2 L971.1 289.3 L972.9 289.8 L974.8 289.8 L976.6 289.6 L978.4 289.3 L980.0 290.5 L983.5 289.4 L988.6 291.1 L996.1 285.3 L999.6 288.8 L1004.2 287.1 L1014.6 287.1 L1018.6 280.7 L1021.5 286.5 L1027.3 285.9 L1032.5 282.5 L1036.5 286.5 L1043.4 278.4 L1049.2 286.5 L1052.4 274.4 L1055.5 285.3 L1063.0 285.1 L1068.8 279.6 L1072.2 284.2 L1078.0 281.9 L1080.3 284.2 L1082.6 277.3 L1084.9 283.0 L1088.4 273.2 L1091.2 284.2 L1095.3 284.8 L1099.3 272.1 L1102.2 284.2 L1105.1 283.3 L1112.6 272.7 L1116.0 285.3 L1120.0 285.3 L1123.5 279.6 L1127.0 284.8 L1132.2 283.6 L1139.1 275.5 L1142.5 284.2 L1144.8 265.7 L1148.3 285.3 L1152.9 279.0 L1158.7 285.3 L1163.3 269.2 L1166.7 284.8 L1173.7 276.7 L1177.1 284.2 L1180.0 284.7 L1184.8 277.8 L1188.1 285.1 L1192.9 279.9 L1195.3 280.7 L1197.4 273.0 L1201.0 284.7 L1206.6 279.9 L1209.9 285.1 L1214.3 269.4 L1217.1 283.9 L1219.5 274.6 L1222.8 284.7 L1227.6 273.4 L1230.8 284.7 L1236.5 278.7 L1241.3 284.7 L1244.2 277.0 L1246.6 284.7 L1249.0 276.2 L1252.6 284.7 L1254.3 281.9 L1257.5 284.7 L1264.7 283.1 L1268.8 284.7 L1271.2 278.7 L1274.4 284.7 L1279.3 283.1 L1284.9 285.5 L1294.6 284.3 L1298.2 273.4 L1301.1 284.7 L1303.1 284.7 L1305.5 279.1" fill="none" stroke="#e0683e" stroke-width="1.15" stroke-linejoin="round"/><path d="M629 311.5L634 303.5L639 311.5Z" fill="#000"/><path d="M268.2 269 L268.2 281.5" fill="none" stroke="#202048" stroke-width="1.1" stroke-dasharray="1.4 1.2"/><path d="M363.5 269 L372.5 283.5" fill="none" stroke="#202048" stroke-width="1.1" stroke-dasharray="1.4 1.2"/><path d="M381.9 269 L372.5 283.5" fill="none" stroke="#202048" stroke-width="1.1" stroke-dasharray="1.4 1.2"/><path d="M403.8 269 L403.6 283" fill="none" stroke="#202048" stroke-width="1.1" stroke-dasharray="1.4 1.2"/><path d="M432.1 242.1 L441.5 255 L441.5 273.5" fill="none" stroke="#202048" stroke-width="1.1" stroke-dasharray="1.4 1.2"/><path d="M450.8 242.1 L465.8 254.4 L465.8 286.5" fill="none" stroke="#8a90bc" stroke-width="1"/><path d="M469.4 242.1 L469.4 267" fill="none" stroke="#202048" stroke-width="1.1" stroke-dasharray="1.4 1.2"/><path d="M487.7 242.1 L474.2 255 L474.2 286" fill="none" stroke="#202048" stroke-width="1.1" stroke-dasharray="1.4 1.2"/><path d="M506.5 242.1 L510.6 255.4" fill="none" stroke="#202048" stroke-width="1.1" stroke-dasharray="1.4 1.2"/><path d="M577.7 234.4 L577.7 248" fill="none" stroke="#8a90bc" stroke-width="1"/><path d="M645.4 227.7 L645.4 242" fill="none" stroke="#202048" stroke-width="1.1" stroke-dasharray="1.4 1.2"/><path d="M606.5 266.7 L625 280.4" fill="none" stroke="#202048" stroke-width="1.1" stroke-dasharray="1.4 1.2"/><path d="M625.2 266.7 L625.2 280.4" fill="none" stroke="#202048" stroke-width="1.1" stroke-dasharray="1.4 1.2"/><path d="M644 266.7 L640 287" fill="none" stroke="#202048" stroke-width="1.1" stroke-dasharray="1.4 1.2"/><path d="M680 262.1 L680 274" fill="none" stroke="#202048" stroke-width="1.1" stroke-dasharray="1.4 1.2"/><path d="M1163.3 255.5 L1163.3 269" fill="none" stroke="#8a90bc" stroke-width="1"/><rect x="263.2" y="259" width="10" height="10" fill="#a6a6dc" stroke="#24246e" stroke-width="1.3"/><rect x="358.5" y="259" width="10" height="10" fill="#a6a6dc" stroke="#24246e" stroke-width="1.3"/><rect x="376.9" y="259" width="10" height="10" fill="#a6a6dc" stroke="#24246e" stroke-width="1.3"/><rect x="398.8" y="259" width="10" height="10" fill="#a6a6dc" stroke="#24246e" stroke-width="1.3"/><rect x="427.1" y="232.1" width="10" height="10" fill="#a6a6dc" stroke="#24246e" stroke-width="1.3"/><rect x="445.8" y="232.1" width="10" height="10" fill="#fff" stroke="#24246e" stroke-width="1.3"/><rect x="464.4" y="232.1" width="10" height="10" fill="#fff" stroke="#24246e" stroke-width="1.3"/><rect x="482.7" y="232.1" width="10" height="10" fill="#fff" stroke="#24246e" stroke-width="1.3"/><rect x="501.5" y="232.1" width="10" height="10" fill="#a6a6dc" stroke="#24246e" stroke-width="1.3"/><rect x="572.7" y="224.4" width="10" height="10" fill="#a6a6dc" stroke="#24246e" stroke-width="1.3"/><rect x="640.4" y="217.7" width="10" height="10" fill="#a6a6dc" stroke="#24246e" stroke-width="1.3"/><rect x="601.5" y="256.7" width="10" height="10" fill="#a6a6dc" stroke="#24246e" stroke-width="1.3"/><rect x="620.2" y="256.7" width="10" height="10" fill="#a6a6dc" stroke="#24246e" stroke-width="1.3"/><rect x="639" y="256.7" width="10" height="10" fill="#a6a6dc" stroke="#24246e" stroke-width="1.3"/><rect x="675" y="252.10000000000002" width="10" height="10" fill="#fff" stroke="#24246e" stroke-width="1.3"/><rect x="1158.3" y="245.5" width="10" height="10" fill="#fff" stroke="#24246e" stroke-width="1.3"/><rect x="629" y="158.8" width="10" height="10" fill="#000080" stroke="#000060" stroke-width="1.2"/><path d="M30.5 421.5V523.9000000000001" stroke="#111" stroke-width="1.4"/><path d="M23.0 439.3H31" stroke="#111" stroke-width="1.5"/><path d="M26.8 460.3H31" stroke="#111" stroke-width="1.5"/><path d="M19.0 481H31" stroke="#111" stroke-width="1.5"/><path d="M26.8 501.8H31" stroke="#111" stroke-width="1.5"/><path d="M23.0 523.2H31" stroke="#111" stroke-width="1.5"/><path d="M31 481H1348" stroke="#b4b4b4" stroke-width="1.1"/><path d="M30 523.2H1348" stroke="#111" stroke-width="1.5"/><path d="M32.5 523.2V526.2" stroke="#111" stroke-width="1.3"/><path d="M46.3 523.2V526.2" stroke="#111" stroke-width="1.3"/><path d="M60.0 523.2V526.2" stroke="#111" stroke-width="1.3"/><path d="M73.7 523.2V531.4000000000001" stroke="#111" stroke-width="1.5"/><path d="M87.4 523.2V526.2" stroke="#111" stroke-width="1.3"/><path d="M101.1 523.2V526.2" stroke="#111" stroke-width="1.3"/><path d="M114.9 523.2V526.2" stroke="#111" stroke-width="1.3"/><path d="M128.6 523.2V526.2" stroke="#111" stroke-width="1.3"/><path d="M142.3 523.2V531.4000000000001" stroke="#111" stroke-width="1.5"/><path d="M156.0 523.2V526.2" stroke="#111" stroke-width="1.3"/><path d="M169.7 523.2V526.2" stroke="#111" stroke-width="1.3"/><path d="M183.4 523.2V526.2" stroke="#111" stroke-width="1.3"/><path d="M197.2 523.2V526.2" stroke="#111" stroke-width="1.3"/><path d="M210.9 523.2V531.4000000000001" stroke="#111" stroke-width="1.5"/><path d="M224.6 523.2V526.2" stroke="#111" stroke-width="1.3"/><path d="M238.3 523.2V526.2" stroke="#111" stroke-width="1.3"/><path d="M252.0 523.2V526.2" stroke="#111" stroke-width="1.3"/><path d="M265.7 523.2V526.2" stroke="#111" stroke-width="1.3"/><path d="M279.5 523.2V531.4000000000001" stroke="#111" stroke-width="1.5"/><path d="M293.2 523.2V526.2" stroke="#111" stroke-width="1.3"/><path d="M306.9 523.2V526.2" stroke="#111" stroke-width="1.3"/><path d="M320.6 523.2V526.2" stroke="#111" stroke-width="1.3"/><path d="M334.3 523.2V526.2" stroke="#111" stroke-width="1.3"/><path d="M348.0 523.2V531.4000000000001" stroke="#111" stroke-width="1.5"/><path d="M361.8 523.2V526.2" stroke="#111" stroke-width="1.3"/><path d="M375.5 523.2V526.2" stroke="#111" stroke-width="1.3"/><path d="M389.2 523.2V526.2" stroke="#111" stroke-width="1.3"/><path d="M402.9 523.2V526.2" stroke="#111" stroke-width="1.3"/><path d="M416.6 523.2V531.4000000000001" stroke="#111" stroke-width="1.5"/><path d="M430.3 523.2V526.2" stroke="#111" stroke-width="1.3"/><path d="M444.1 523.2V526.2" stroke="#111" stroke-width="1.3"/><path d="M457.8 523.2V526.2" stroke="#111" stroke-width="1.3"/><path d="M471.5 523.2V526.2" stroke="#111" stroke-width="1.3"/><path d="M485.2 523.2V531.4000000000001" stroke="#111" stroke-width="1.5"/><path d="M498.9 523.2V526.2" stroke="#111" stroke-width="1.3"/><path d="M512.6 523.2V526.2" stroke="#111" stroke-width="1.3"/><path d="M526.4 523.2V526.2" stroke="#111" stroke-width="1.3"/><path d="M540.1 523.2V526.2" stroke="#111" stroke-width="1.3"/><path d="M553.8 523.2V531.4000000000001" stroke="#111" stroke-width="1.5"/><path d="M567.5 523.2V526.2" stroke="#111" stroke-width="1.3"/><path d="M581.2 523.2V526.2" stroke="#111" stroke-width="1.3"/><path d="M594.9 523.2V526.2" stroke="#111" stroke-width="1.3"/><path d="M608.7 523.2V526.2" stroke="#111" stroke-width="1.3"/><path d="M622.4 523.2V531.4000000000001" stroke="#111" stroke-width="1.5"/><path d="M636.1 523.2V526.2" stroke="#111" stroke-width="1.3"/><path d="M649.8 523.2V526.2" stroke="#111" stroke-width="1.3"/><path d="M663.5 523.2V526.2" stroke="#111" stroke-width="1.3"/><path d="M677.2 523.2V526.2" stroke="#111" stroke-width="1.3"/><path d="M691.0 523.2V531.4000000000001" stroke="#111" stroke-width="1.5"/><path d="M704.7 523.2V526.2" stroke="#111" stroke-width="1.3"/><path d="M718.4 523.2V526.2" stroke="#111" stroke-width="1.3"/><path d="M732.1 523.2V526.2" stroke="#111" stroke-width="1.3"/><path d="M745.8 523.2V526.2" stroke="#111" stroke-width="1.3"/><path d="M759.5 523.2V531.4000000000001" stroke="#111" stroke-width="1.5"/><path d="M773.3 523.2V526.2" stroke="#111" stroke-width="1.3"/><path d="M787.0 523.2V526.2" stroke="#111" stroke-width="1.3"/><path d="M800.7 523.2V526.2" stroke="#111" stroke-width="1.3"/><path d="M814.4 523.2V526.2" stroke="#111" stroke-width="1.3"/><path d="M828.1 523.2V531.4000000000001" stroke="#111" stroke-width="1.5"/><path d="M841.9 523.2V526.2" stroke="#111" stroke-width="1.3"/><path d="M855.6 523.2V526.2" stroke="#111" stroke-width="1.3"/><path d="M869.3 523.2V526.2" stroke="#111" stroke-width="1.3"/><path d="M883.0 523.2V526.2" stroke="#111" stroke-width="1.3"/><path d="M896.7 523.2V531.4000000000001" stroke="#111" stroke-width="1.5"/><path d="M910.4 523.2V526.2" stroke="#111" stroke-width="1.3"/><path d="M924.2 523.2V526.2" stroke="#111" stroke-width="1.3"/><path d="M937.9 523.2V526.2" stroke="#111" stroke-width="1.3"/><path d="M951.6 523.2V526.2" stroke="#111" stroke-width="1.3"/><path d="M965.3 523.2V531.4000000000001" stroke="#111" stroke-width="1.5"/><path d="M979.0 523.2V526.2" stroke="#111" stroke-width="1.3"/><path d="M992.7 523.2V526.2" stroke="#111" stroke-width="1.3"/><path d="M1006.5 523.2V526.2" stroke="#111" stroke-width="1.3"/><path d="M1020.2 523.2V526.2" stroke="#111" stroke-width="1.3"/><path d="M1033.9 523.2V531.4000000000001" stroke="#111" stroke-width="1.5"/><path d="M1047.6 523.2V526.2" stroke="#111" stroke-width="1.3"/><path d="M1061.3 523.2V526.2" stroke="#111" stroke-width="1.3"/><path d="M1075.0 523.2V526.2" stroke="#111" stroke-width="1.3"/><path d="M1088.8 523.2V526.2" stroke="#111" stroke-width="1.3"/><path d="M1102.5 523.2V531.4000000000001" stroke="#111" stroke-width="1.5"/><path d="M1116.2 523.2V526.2" stroke="#111" stroke-width="1.3"/><path d="M1129.9 523.2V526.2" stroke="#111" stroke-width="1.3"/><path d="M1143.6 523.2V526.2" stroke="#111" stroke-width="1.3"/><path d="M1157.3 523.2V526.2" stroke="#111" stroke-width="1.3"/><path d="M1171.1 523.2V531.4000000000001" stroke="#111" stroke-width="1.5"/><path d="M1184.8 523.2V526.2" stroke="#111" stroke-width="1.3"/><path d="M1198.5 523.2V526.2" stroke="#111" stroke-width="1.3"/><path d="M1212.2 523.2V526.2" stroke="#111" stroke-width="1.3"/><path d="M1225.9 523.2V526.2" stroke="#111" stroke-width="1.3"/><path d="M1239.6 523.2V531.4000000000001" stroke="#111" stroke-width="1.5"/><path d="M1253.4 523.2V526.2" stroke="#111" stroke-width="1.3"/><path d="M1267.1 523.2V526.2" stroke="#111" stroke-width="1.3"/><path d="M1280.8 523.2V526.2" stroke="#111" stroke-width="1.3"/><path d="M1294.5 523.2V526.2" stroke="#111" stroke-width="1.3"/><path d="M1308.2 523.2V531.4000000000001" stroke="#111" stroke-width="1.5"/><path d="M1321.9 523.2V526.2" stroke="#111" stroke-width="1.3"/><path d="M1335.7 523.2V526.2" stroke="#111" stroke-width="1.3"/><path d="M73.7 480.3V481.3M75.7 480.3V481.4M77.0 480.1V481.4M78.7 480.0V481.5M83.2 480.6V481.2M91.0 480.2V481.4M93.6 480.7V481.2M96.8 480.2V481.4M103.5 480.1V481.4M108.9 480.6V481.2M116.6 480.3V481.4M127.9 480.1V481.5M142.8 480.1V481.4M144.9 480.5V481.3M165.4 480.1V481.5M191.2 480.4V481.3M193.7 480.3V481.4M196.4 480.3V481.4M203.5 480.7V481.2M219.4 480.3V481.3M225.7 480.4V481.3M228.5 480.5V481.3M234.1 480.2V481.4M239.1 480.3V481.3M243.8 480.5V481.2M250.0 480.6V481.2M253.5 480.4V481.3M255.7 480.1V481.5M257.2 480.0V481.5M266.0 480.2V481.4M271.5 480.5V481.3M273.2 480.3V481.4M284.9 480.2V481.4M286.4 480.2V481.4M288.8 480.0V481.5M291.4 480.5V481.2M294.6 480.2V481.4M296.6 480.3V481.3M299.7 480.1V481.4M303.1 480.1V481.4M304.2 480.1V481.5M305.4 480.5V481.2M307.8 480.4V481.3M310.8 480.7V481.2M312.2 480.7V481.2M315.7 480.6V481.2M318.1 480.5V481.3M320.0 480.3V481.4M322.0 480.5V481.3M323.4 480.2V481.4M325.4 480.6V481.2M327.5 480.2V481.4M329.5 480.3V481.4M331.7 480.4V481.3M334.5 480.2V481.4M336.7 480.3V481.3M339.5 480.4V481.3M341.7 480.0V481.5M343.7 480.1V481.4M345.5 480.6V481.2M348.6 480.1V481.5M351.6 480.2V481.4M354.1 480.3V481.4M355.2 480.2V481.4M356.4 480.6V481.2M359.7 480.7V481.2M362.9 480.1V481.4M365.6 480.0V481.5M368.2 480.7V481.2M371.2 480.2V481.4M372.5 480.0V481.5M373.8 480.3V481.3M376.9 480.6V481.2M378.6 480.2V481.4M380.7 480.4V481.3M382.7 480.6V481.2M387.1 480.6V481.2M392.7 480.4V481.3M396.8 480.2V481.4M400.2 480.4V481.3M403.0 480.5V481.2M404.6 480.5V481.3M409.8 480.2V481.4M414.4 480.5V481.2M415.6 480.4V481.3M417.1 480.5V481.3M420.1 480.0V481.5M433.3 480.2V481.4M438.4 480.2V481.4M444.4 480.6V481.2M446.1 480.2V481.4M455.8 480.6V481.2M463.7 480.5V481.3M473.4 480.5V481.2M476.1 480.1V481.5M479.5 480.0V481.5M521.6 480.2V481.4M532.5 480.3V481.3M544.5 480.5V481.2M545.8 480.2V481.4M548.7 480.6V481.2M556.5 480.4V481.3M560.6 480.5V481.2M563.6 480.1V481.4M582.0 480.2V481.4M584.7 480.3V481.3M587.0 480.3V481.3M588.2 480.2V481.4M590.4 480.0V481.5M593.7 480.1V481.4M596.3 480.4V481.3M598.0 480.3V481.3M601.4 480.1V481.5M604.2 480.1V481.5M609.6 480.5V481.3M615.9 480.2V481.4M618.2 480.7V481.2M619.5 480.6V481.2M621.8 480.3V481.3M624.0 480.5V481.3M626.2 480.4V481.3M630.6 480.4V481.3M633.0 480.5V481.2M634.2 480.2V481.4M635.6 480.6V481.2M637.2 480.4V481.3M638.7 480.6V481.2M640.2 480.7V481.2M641.4 480.4V481.3M644.2 480.4V481.3M646.3 480.0V481.5M647.9 480.4V481.3M649.4 480.5V481.3M650.9 480.2V481.4M652.6 480.4V481.3M656.0 480.5V481.2M657.8 480.3V481.4M659.7 480.2V481.4M663.2 480.7V481.2M664.4 480.6V481.2M665.6 480.2V481.4M668.9 480.0V481.5M671.2 480.1V481.5M674.6 480.5V481.3M678.5 480.1V481.4M679.9 480.5V481.3M684.2 480.2V481.4M687.4 480.1V481.5M689.3 480.5V481.2M692.4 480.5V481.2M693.9 480.3V481.4M696.7 480.4V481.3M698.2 480.7V481.2M700.5 480.2V481.4M701.8 480.1V481.4M707.7 480.1V481.5M710.6 480.4V481.3M711.9 480.0V481.5M713.3 480.6V481.2M714.6 480.5V481.2M715.8 480.2V481.4M718.3 480.5V481.2M721.8 480.3V481.3M729.0 480.6V481.2M731.6 480.0V481.5M734.5 480.5V481.2M743.6 480.3V481.4M745.8 480.1V481.4M753.5 480.4V481.3M767.7 480.5V481.2M801.5 480.2V481.4M811.7 480.6V481.2M838.9 480.3V481.3M841.3 480.7V481.2M849.4 480.7V481.2M858.0 480.7V481.2M866.0 480.6V481.2M873.8 480.6V481.2M886.4 480.3V481.3M888.0 480.2V481.4M893.6 480.4V481.3M896.7 480.0V481.5M898.2 480.3V481.3M906.0 480.3V481.4M908.5 480.5V481.2M912.7 480.4V481.3M918.5 480.6V481.2M921.9 480.4V481.3M925.0 480.5V481.2M930.4 480.5V481.2M931.8 480.0V481.5M933.1 480.6V481.2M934.4 480.2V481.4M937.5 480.1V481.4M938.7 480.0V481.5M939.9 480.4V481.3M941.7 480.7V481.2M949.1 480.6V481.2M950.4 480.6V481.2M951.9 480.1V481.5M955.6 480.6V481.2M959.4 480.6V481.2M960.8 480.1V481.5M962.1 480.0V481.5M967.4 480.0V481.5M969.7 480.5V481.3M970.8 480.2V481.4M973.8 480.4V481.3M976.3 480.3V481.3M979.4 480.3V481.4M982.8 480.6V481.2M986.3 480.6V481.2M988.0 480.7V481.2M991.6 480.1V481.5M992.9 480.1V481.5M998.8 480.2V481.4M1000.1 480.4V481.3M1001.6 480.5V481.3M1003.9 480.5V481.3M1005.9 480.0V481.5M1012.5 480.0V481.5M1014.2 480.3V481.3M1017.1 480.2V481.4M1021.2 480.3V481.3M1026.8 480.3V481.4M1028.1 480.1V481.4M1031.1 480.1V481.4M1035.1 480.3V481.3M1038.4 480.1V481.5M1041.3 480.5V481.3M1043.6 480.4V481.3M1048.9 480.5V481.2M1052.3 480.5V481.3M1054.1 480.3V481.3M1072.5 480.6V481.2M1076.9 480.5V481.3M1079.6 480.4V481.3M1086.8 480.0V481.5M1089.6 480.4V481.3M1093.8 480.4V481.3M1104.5 480.4V481.3M1135.0 480.4V481.3M1148.2 480.4V481.3M1153.4 480.4V481.3M1155.5 480.5V481.2M1159.2 480.5V481.2M1167.3 480.2V481.4M1174.1 480.1V481.4M1179.9 480.1V481.5M1182.7 480.1V481.4M1186.2 480.0V481.5M1188.5 480.2V481.4M1193.0 480.3V481.3M1204.9 480.2V481.4M1207.4 480.1V481.5M1217.2 480.7V481.2M1221.9 480.3V481.3M1226.1 480.6V481.2M1228.6 480.2V481.4M1230.1 480.6V481.2M1232.2 480.6V481.2M1233.4 480.6V481.2M1235.8 480.6V481.2M1241.4 480.4V481.3M1242.7 480.5V481.3M1246.1 480.0V481.5M1248.4 480.5V481.2M1251.9 480.3V481.3M1254.2 480.5V481.2M1257.8 480.2V481.4M1261.1 480.2V481.4M1264.0 480.4V481.3M1267.5 480.2V481.4M1269.0 480.5V481.2M1271.4 480.1V481.5M1274.3 480.2V481.4M1276.5 480.5V481.2M1278.9 480.4V481.3M1280.1 480.3V481.4M1281.8 480.3V481.3M1285.2 480.2V481.4M1287.2 480.3V481.3M1290.2 480.6V481.2M1294.6 480.2V481.4M1296.0 480.2V481.4M1298.6 480.6V481.2M1301.3 480.6V481.2M1302.4 480.2V481.4M1304.4 480.0V481.5M1307.1 480.2V481.4M1308.2 480.2V481.4" stroke="#4848c0" stroke-width="1" stroke-opacity="0.55"/><path d="M204.4 421.5V523" stroke="#8a8a8a" stroke-width="1.1"/><path d="M198 529.5L204.4 522L210.8 529.5Z" fill="#000"/><path d="M319.4 439.8V481M259.1 471V481M701.0 478.5V483.5" stroke="#3030c8" stroke-width="1.3"/><path d="M319.4 481V523M259.1 481V492" stroke="#222" stroke-width="1.3"/><path d="M321.4 475V486M260.1 478V484" stroke="#4040c0" stroke-width="1.2"/><path d="M699.3 477.8L703.5 481L699.3 484.2Z" fill="#5050b0"/><path d="M30.5 613.5V684.9000000000001" stroke="#111" stroke-width="1.4"/><path d="M26.8 629.1H31" stroke="#111" stroke-width="1.5"/><path d="M19.0 656.6H31" stroke="#111" stroke-width="1.5"/><path d="M23.0 684.2H31" stroke="#111" stroke-width="1.5"/><path d="M31 656.6H1348" stroke="#b4b4b4" stroke-width="1.1"/><path d="M30 684.2H1348" stroke="#111" stroke-width="1.5"/><path d="M32.5 684.2V687.2" stroke="#111" stroke-width="1.3"/><path d="M46.3 684.2V687.2" stroke="#111" stroke-width="1.3"/><path d="M60.0 684.2V687.2" stroke="#111" stroke-width="1.3"/><path d="M73.7 684.2V692.4000000000001" stroke="#111" stroke-width="1.5"/><path d="M87.4 684.2V687.2" stroke="#111" stroke-width="1.3"/><path d="M101.1 684.2V687.2" stroke="#111" stroke-width="1.3"/><path d="M114.9 684.2V687.2" stroke="#111" stroke-width="1.3"/><path d="M128.6 684.2V687.2" stroke="#111" stroke-width="1.3"/><path d="M142.3 684.2V692.4000000000001" stroke="#111" stroke-width="1.5"/><path d="M156.0 684.2V687.2" stroke="#111" stroke-width="1.3"/><path d="M169.7 684.2V687.2" stroke="#111" stroke-width="1.3"/><path d="M183.4 684.2V687.2" stroke="#111" stroke-width="1.3"/><path d="M197.2 684.2V687.2" stroke="#111" stroke-width="1.3"/><path d="M210.9 684.2V692.4000000000001" stroke="#111" stroke-width="1.5"/><path d="M224.6 684.2V687.2" stroke="#111" stroke-width="1.3"/><path d="M238.3 684.2V687.2" stroke="#111" stroke-width="1.3"/><path d="M252.0 684.2V687.2" stroke="#111" stroke-width="1.3"/><path d="M265.7 684.2V687.2" stroke="#111" stroke-width="1.3"/><path d="M279.5 684.2V692.4000000000001" stroke="#111" stroke-width="1.5"/><path d="M293.2 684.2V687.2" stroke="#111" stroke-width="1.3"/><path d="M306.9 684.2V687.2" stroke="#111" stroke-width="1.3"/><path d="M320.6 684.2V687.2" stroke="#111" stroke-width="1.3"/><path d="M334.3 684.2V687.2" stroke="#111" stroke-width="1.3"/><path d="M348.0 684.2V692.4000000000001" stroke="#111" stroke-width="1.5"/><path d="M361.8 684.2V687.2" stroke="#111" stroke-width="1.3"/><path d="M375.5 684.2V687.2" stroke="#111" stroke-width="1.3"/><path d="M389.2 684.2V687.2" stroke="#111" stroke-width="1.3"/><path d="M402.9 684.2V687.2" stroke="#111" stroke-width="1.3"/><path d="M416.6 684.2V692.4000000000001" stroke="#111" stroke-width="1.5"/><path d="M430.3 684.2V687.2" stroke="#111" stroke-width="1.3"/><path d="M444.1 684.2V687.2" stroke="#111" stroke-width="1.3"/><path d="M457.8 684.2V687.2" stroke="#111" stroke-width="1.3"/><path d="M471.5 684.2V687.2" stroke="#111" stroke-width="1.3"/><path d="M485.2 684.2V692.4000000000001" stroke="#111" stroke-width="1.5"/><path d="M498.9 684.2V687.2" stroke="#111" stroke-width="1.3"/><path d="M512.6 684.2V687.2" stroke="#111" stroke-width="1.3"/><path d="M526.4 684.2V687.2" stroke="#111" stroke-width="1.3"/><path d="M540.1 684.2V687.2" stroke="#111" stroke-width="1.3"/><path d="M553.8 684.2V692.4000000000001" stroke="#111" stroke-width="1.5"/><path d="M567.5 684.2V687.2" stroke="#111" stroke-width="1.3"/><path d="M581.2 684.2V687.2" stroke="#111" stroke-width="1.3"/><path d="M594.9 684.2V687.2" stroke="#111" stroke-width="1.3"/><path d="M608.7 684.2V687.2" stroke="#111" stroke-width="1.3"/><path d="M622.4 684.2V692.4000000000001" stroke="#111" stroke-width="1.5"/><path d="M636.1 684.2V687.2" stroke="#111" stroke-width="1.3"/><path d="M649.8 684.2V687.2" stroke="#111" stroke-width="1.3"/><path d="M663.5 684.2V687.2" stroke="#111" stroke-width="1.3"/><path d="M677.2 684.2V687.2" stroke="#111" stroke-width="1.3"/><path d="M691.0 684.2V692.4000000000001" stroke="#111" stroke-width="1.5"/><path d="M704.7 684.2V687.2" stroke="#111" stroke-width="1.3"/><path d="M718.4 684.2V687.2" stroke="#111" stroke-width="1.3"/><path d="M732.1 684.2V687.2" stroke="#111" stroke-width="1.3"/><path d="M745.8 684.2V687.2" stroke="#111" stroke-width="1.3"/><path d="M759.5 684.2V692.4000000000001" stroke="#111" stroke-width="1.5"/><path d="M773.3 684.2V687.2" stroke="#111" stroke-width="1.3"/><path d="M787.0 684.2V687.2" stroke="#111" stroke-width="1.3"/><path d="M800.7 684.2V687.2" stroke="#111" stroke-width="1.3"/><path d="M814.4 684.2V687.2" stroke="#111" stroke-width="1.3"/><path d="M828.1 684.2V692.4000000000001" stroke="#111" stroke-width="1.5"/><path d="M841.9 684.2V687.2" stroke="#111" stroke-width="1.3"/><path d="M855.6 684.2V687.2" stroke="#111" stroke-width="1.3"/><path d="M869.3 684.2V687.2" stroke="#111" stroke-width="1.3"/><path d="M883.0 684.2V687.2" stroke="#111" stroke-width="1.3"/><path d="M896.7 684.2V692.4000000000001" stroke="#111" stroke-width="1.5"/><path d="M910.4 684.2V687.2" stroke="#111" stroke-width="1.3"/><path d="M924.2 684.2V687.2" stroke="#111" stroke-width="1.3"/><path d="M937.9 684.2V687.2" stroke="#111" stroke-width="1.3"/><path d="M951.6 684.2V687.2" stroke="#111" stroke-width="1.3"/><path d="M965.3 684.2V692.4000000000001" stroke="#111" stroke-width="1.5"/><path d="M979.0 684.2V687.2" stroke="#111" stroke-width="1.3"/><path d="M992.7 684.2V687.2" stroke="#111" stroke-width="1.3"/><path d="M1006.5 684.2V687.2" stroke="#111" stroke-width="1.3"/><path d="M1020.2 684.2V687.2" stroke="#111" stroke-width="1.3"/><path d="M1033.9 684.2V692.4000000000001" stroke="#111" stroke-width="1.5"/><path d="M1047.6 684.2V687.2" stroke="#111" stroke-width="1.3"/><path d="M1061.3 684.2V687.2" stroke="#111" stroke-width="1.3"/><path d="M1075.0 684.2V687.2" stroke="#111" stroke-width="1.3"/><path d="M1088.8 684.2V687.2" stroke="#111" stroke-width="1.3"/><path d="M1102.5 684.2V692.4000000000001" stroke="#111" stroke-width="1.5"/><path d="M1116.2 684.2V687.2" stroke="#111" stroke-width="1.3"/><path d="M1129.9 684.2V687.2" stroke="#111" stroke-width="1.3"/><path d="M1143.6 684.2V687.2" stroke="#111" stroke-width="1.3"/><path d="M1157.3 684.2V687.2" stroke="#111" stroke-width="1.3"/><path d="M1171.1 684.2V692.4000000000001" stroke="#111" stroke-width="1.5"/><path d="M1184.8 684.2V687.2" stroke="#111" stroke-width="1.3"/><path d="M1198.5 684.2V687.2" stroke="#111" stroke-width="1.3"/><path d="M1212.2 684.2V687.2" stroke="#111" stroke-width="1.3"/><path d="M1225.9 684.2V687.2" stroke="#111" stroke-width="1.3"/><path d="M1239.6 684.2V692.4000000000001" stroke="#111" stroke-width="1.5"/><path d="M1253.4 684.2V687.2" stroke="#111" stroke-width="1.3"/><path d="M1267.1 684.2V687.2" stroke="#111" stroke-width="1.3"/><path d="M1280.8 684.2V687.2" stroke="#111" stroke-width="1.3"/><path d="M1294.5 684.2V687.2" stroke="#111" stroke-width="1.3"/><path d="M1308.2 684.2V692.4000000000001" stroke="#111" stroke-width="1.5"/><path d="M1321.9 684.2V687.2" stroke="#111" stroke-width="1.3"/><path d="M1335.7 684.2V687.2" stroke="#111" stroke-width="1.3"/><path d="M37.9 655.7V657.1M43.8 655.9V656.9M47.3 656.0V656.9M54.9 656.1V656.8M65.2 655.8V657.0M67.0 655.8V657.0M72.5 656.2V656.8M81.3 656.0V656.9M84.3 656.0V656.9M88.8 655.9V657.0M95.0 656.3V656.8M98.1 656.0V656.9M113.7 655.9V656.9M117.2 656.1V656.8M128.4 655.9V657.0M129.9 655.8V657.0M134.9 655.7V657.1M144.4 655.7V657.0M151.5 655.9V657.0M162.6 655.8V657.0M165.5 655.6V657.1M168.2 655.7V657.1M175.1 655.6V657.1M183.2 656.2V656.8M190.6 656.2V656.8M193.9 656.2V656.8M214.3 656.3V656.8M217.4 655.9V657.0M221.2 656.2V656.8M226.9 656.0V656.9M236.1 655.6V657.1M248.2 655.9V657.0M251.4 655.8V657.0M255.3 655.8V657.0M261.7 655.9V657.0M274.8 655.9V657.0M281.0 656.2V656.8M284.5 656.3V656.8M290.3 655.8V657.0M304.1 656.1V656.8M308.1 656.1V656.8M309.9 655.6V657.1M314.6 655.8V657.0M322.4 655.9V656.9M329.1 656.2V656.8M333.2 656.1V656.8M339.6 656.1V656.8" stroke="#4848c0" stroke-width="1" stroke-opacity="0.55"/><path d="M319.4 631.9V656.6M237.0 643.8V656.6" stroke="#3030c8" stroke-width="1.3"/><path d="M319.4 656.6V684.2" stroke="#222" stroke-width="1.3"/><defs><clipPath id="lg"><rect x="990" y="612" width="350" height="38"/></clipPath></defs><g clip-path="url(#lg)" font-family="Liberation Sans, sans-serif" font-size="14.9"><text x="1005" y="637.1" fill="#3434b4">– MS Level 2 Raw Spectrum 3056 at 8.9343 min</text><text x="1005" y="653.2" fill="#222">– MS2L #7623: Triphenylphosphine oxide</text></g><path d="M904.4 637.3 L911.3 625.6 L924.6 625.6 L931.5 637.3 L924.6 649.4 L911.3 649.4Z" fill="none" stroke="#505050" stroke-width="1"/><path d="M914.0 628.2L921.9 628.2" stroke="#505050" stroke-width="1"/><path d="M927.9 638.5L923.8 645.6" stroke="#505050" stroke-width="1"/><path d="M912.1 645.6L908.0 638.5" stroke="#505050" stroke-width="1"/><path d="M959.7 637.3 L966.1 625.6 L979.9 625.6 L986.8 637.3 L979.9 649.4 L966.1 649.4Z" fill="none" stroke="#505050" stroke-width="1"/><path d="M963.2 636.2L967.0 629.3" stroke="#505050" stroke-width="1"/><path d="M979.0 629.3L983.1 636.2" stroke="#505050" stroke-width="1"/><path d="M977.1 646.8L968.9 646.8" stroke="#505050" stroke-width="1"/><path d="M945.1 650.9 L957.4 658.2 L957.4 671.7 L945.1 678.9 L933.2 671.7 L933.2 658.2Z" fill="none" stroke="#505050" stroke-width="1"/><path d="M946.3 654.7L953.6 659.0" stroke="#505050" stroke-width="1"/><path d="M953.6 670.9L946.3 675.2" stroke="#505050" stroke-width="1"/><path d="M935.8 668.9L935.8 660.9" stroke="#505050" stroke-width="1"/><path d="M931.5 637.3H942.5M948 637.3H959.7M945.1 640V650.9M944 627V633M946.2 627V633" stroke="#505050" stroke-width="1"/><circle cx="945.1" cy="622.3" r="2.3" fill="none" stroke="#505050" stroke-width="0.9"/><text x="945.1" y="641" font-size="8" text-anchor="middle" fill="#505050" font-family="Liberation Sans, sans-serif">P</text><g font-family="Liberation Sans, sans-serif"><text x="35" y="184.7" font-size="16" text-anchor="end" fill="#000" font-weight="normal" letter-spacing="0.6">100</text><text x="35" y="243.9" font-size="16" text-anchor="end" fill="#000" font-weight="normal" letter-spacing="0.6">50</text><text x="91.5" y="324.6" font-size="16" text-anchor="middle" fill="#000" font-weight="normal" >0</text><text x="152.24" y="324.6" font-size="16" text-anchor="middle" fill="#000" font-weight="normal" >1</text><text x="212.98000000000002" y="324.6" font-size="16" text-anchor="middle" fill="#000" font-weight="normal" >2</text><text x="273.72" y="324.6" font-size="16" text-anchor="middle" fill="#000" font-weight="normal" >3</text><text x="334.46000000000004" y="324.6" font-size="16" text-anchor="middle" fill="#000" font-weight="normal" >4</text><text x="395.2" y="324.6" font-size="16" text-anchor="middle" fill="#000" font-weight="normal" >5</text><text x="455.94" y="324.6" font-size="16" text-anchor="middle" fill="#000" font-weight="normal" >6</text><text x="516.6800000000001" y="324.6" font-size="16" text-anchor="middle" fill="#000" font-weight="normal" >7</text><text x="577.4200000000001" y="324.6" font-size="16" text-anchor="middle" fill="#000" font-weight="normal" >8</text><text x="638.16" y="324.6" font-size="16" text-anchor="middle" fill="#000" font-weight="normal" >9</text><text x="698.9" y="324.6" font-size="16" text-anchor="middle" fill="#000" font-weight="normal" >10</text><text x="759.64" y="324.6" font-size="16" text-anchor="middle" fill="#000" font-weight="normal" >11</text><text x="820.38" y="324.6" font-size="16" text-anchor="middle" fill="#000" font-weight="normal" >12</text><text x="881.12" y="324.6" font-size="16" text-anchor="middle" fill="#000" font-weight="normal" >13</text><text x="941.86" y="324.6" font-size="16" text-anchor="middle" fill="#000" font-weight="normal" >14</text><text x="1002.6" y="324.6" font-size="16" text-anchor="middle" fill="#000" font-weight="normal" >15</text><text x="1063.3400000000001" y="324.6" font-size="16" text-anchor="middle" fill="#000" font-weight="normal" >16</text><text x="1124.08" y="324.6" font-size="16" text-anchor="middle" fill="#000" font-weight="normal" >17</text><text x="1184.82" y="324.6" font-size="16" text-anchor="middle" fill="#000" font-weight="normal" >18</text><text x="1245.56" y="324.6" font-size="16" text-anchor="middle" fill="#000" font-weight="normal" >19</text><text x="1306.3" y="324.6" font-size="16" text-anchor="middle" fill="#000" font-weight="normal" >20</text><text x="698" y="346" font-size="18.5" text-anchor="middle" fill="#000" font-weight="normal" >min</text><text x="16.2" y="486.4" font-size="16.5" text-anchor="end" fill="#000" font-weight="normal" >0</text><text x="74.2" y="544.2" font-size="16" text-anchor="middle" fill="#000" font-weight="normal" letter-spacing="0.9">100</text><text x="142.785" y="544.2" font-size="16" text-anchor="middle" fill="#000" font-weight="normal" letter-spacing="0.9">150</text><text x="211.37" y="544.2" font-size="16" text-anchor="middle" fill="#000" font-weight="normal" letter-spacing="0.9">200</text><text x="279.955" y="544.2" font-size="16" text-anchor="middle" fill="#000" font-weight="normal" letter-spacing="0.9">250</text><text x="348.53999999999996" y="544.2" font-size="16" text-anchor="middle" fill="#000" font-weight="normal" letter-spacing="0.9">300</text><text x="417.12499999999994" y="544.2" font-size="16" text-anchor="middle" fill="#000" font-weight="normal" letter-spacing="0.9">350</text><text x="485.71" y="544.2" font-size="16" text-anchor="middle" fill="#000" font-weight="normal" letter-spacing="0.9">400</text><text x="554.295" y="544.2" font-size="16" text-anchor="middle" fill="#000" font-weight="normal" letter-spacing="0.9">450</text><text x="622.88" y="544.2" font-size="16" text-anchor="middle" fill="#000" font-weight="normal" letter-spacing="0.9">500</text><text x="691.465" y="544.2" font-size="16" text-anchor="middle" fill="#000" font-weight="normal" letter-spacing="0.9">550</text><text x="760.05" y="544.2" font-size="16" text-anchor="middle" fill="#000" font-weight="normal" letter-spacing="0.9">600</text><text x="828.635" y="544.2" font-size="16" text-anchor="middle" fill="#000" font-weight="normal" letter-spacing="0.9">650</text><text x="897.22" y="544.2" font-size="16" text-anchor="middle" fill="#000" font-weight="normal" letter-spacing="0.9">700</text><text x="965.805" y="544.2" font-size="16" text-anchor="middle" fill="#000" font-weight="normal" letter-spacing="0.9">750</text><text x="1034.3899999999999" y="544.2" font-size="16" text-anchor="middle" fill="#000" font-weight="normal" letter-spacing="0.9">800</text><text x="1102.975" y="544.2" font-size="16" text-anchor="middle" fill="#000" font-weight="normal" letter-spacing="0.9">850</text><text x="1171.56" y="544.2" font-size="16" text-anchor="middle" fill="#000" font-weight="normal" letter-spacing="0.9">900</text><text x="1240.145" y="544.2" font-size="16" text-anchor="middle" fill="#000" font-weight="normal" letter-spacing="0.9">950</text><text x="1308.73" y="544.2" font-size="16" text-anchor="middle" fill="#000" font-weight="normal" letter-spacing="0.9">1000</text><text x="688.5" y="565.6" font-size="19.5" text-anchor="middle" fill="#000" font-weight="normal" font-style="italic">m/z</text><text x="319" y="436.7" font-size="14.6" text-anchor="middle" fill="#10105a" font-weight="bold" >279.0929</text><text x="258.1" y="467.8" font-size="14.6" text-anchor="middle" fill="#10105a" font-weight="bold" >235.1801</text><text x="700.5" y="475.6" font-size="14.6" text-anchor="middle" fill="#10105a" font-weight="bold" >557.2793</text><text x="965" y="449.8" font-size="14.9" text-anchor="start" fill="#3434b4" font-weight="normal" >– MS Level 1 Extracted Spectrum 3055 at 8.9328 min</text><text x="965" y="467.5" font-size="14.9" text-anchor="start" fill="#222" font-weight="normal" >– MS Level 1 Raw Spectrum 3055 at 8.9328 min</text><text x="16.2" y="662.0" font-size="16.5" text-anchor="end" fill="#000" font-weight="normal" >0</text><text x="74.2" y="705.8" font-size="16" text-anchor="middle" fill="#000" font-weight="normal" letter-spacing="0.9">100</text><text x="142.785" y="705.8" font-size="16" text-anchor="middle" fill="#000" font-weight="normal" letter-spacing="0.9">150</text><text x="211.37" y="705.8" font-size="16" text-anchor="middle" fill="#000" font-weight="normal" letter-spacing="0.9">200</text><text x="279.955" y="705.8" font-size="16" text-anchor="middle" fill="#000" font-weight="normal" letter-spacing="0.9">250</text><text x="348.53999999999996" y="705.8" font-size="16" text-anchor="middle" fill="#000" font-weight="normal" letter-spacing="0.9">300</text><text x="417.12499999999994" y="705.8" font-size="16" text-anchor="middle" fill="#000" font-weight="normal" letter-spacing="0.9">350</text><text x="485.71" y="705.8" font-size="16" text-anchor="middle" fill="#000" font-weight="normal" letter-spacing="0.9">400</text><text x="554.295" y="705.8" font-size="16" text-anchor="middle" fill="#000" font-weight="normal" letter-spacing="0.9">450</text><text x="622.88" y="705.8" font-size="16" text-anchor="middle" fill="#000" font-weight="normal" letter-spacing="0.9">500</text><text x="691.465" y="705.8" font-size="16" text-anchor="middle" fill="#000" font-weight="normal" letter-spacing="0.9">550</text><text x="760.05" y="705.8" font-size="16" text-anchor="middle" fill="#000" font-weight="normal" letter-spacing="0.9">600</text><text x="828.635" y="705.8" font-size="16" text-anchor="middle" fill="#000" font-weight="normal" letter-spacing="0.9">650</text><text x="897.22" y="705.8" font-size="16" text-anchor="middle" fill="#000" font-weight="normal" letter-spacing="0.9">700</text><text x="965.805" y="705.8" font-size="16" text-anchor="middle" fill="#000" font-weight="normal" letter-spacing="0.9">750</text><text x="1034.3899999999999" y="705.8" font-size="16" text-anchor="middle" fill="#000" font-weight="normal" letter-spacing="0.9">800</text><text x="1102.975" y="705.8" font-size="16" text-anchor="middle" fill="#000" font-weight="normal" letter-spacing="0.9">850</text><text x="1171.56" y="705.8" font-size="16" text-anchor="middle" fill="#000" font-weight="normal" letter-spacing="0.9">900</text><text x="1240.145" y="705.8" font-size="16" text-anchor="middle" fill="#000" font-weight="normal" letter-spacing="0.9">950</text><text x="1308.73" y="705.8" font-size="16" text-anchor="middle" fill="#000" font-weight="normal" letter-spacing="0.9">1000</text><text x="688.5" y="725.2" font-size="19.5" text-anchor="middle" fill="#000" font-weight="normal" font-style="italic">m/z</text><text x="318.5" y="629.1" font-size="14.6" text-anchor="middle" fill="#10105a" font-weight="bold" >279.0931</text><text x="236.6" y="640.6" font-size="14.6" text-anchor="middle" fill="#10105a" font-weight="bold" >219.0570</text></g></svg>
</body></html>
